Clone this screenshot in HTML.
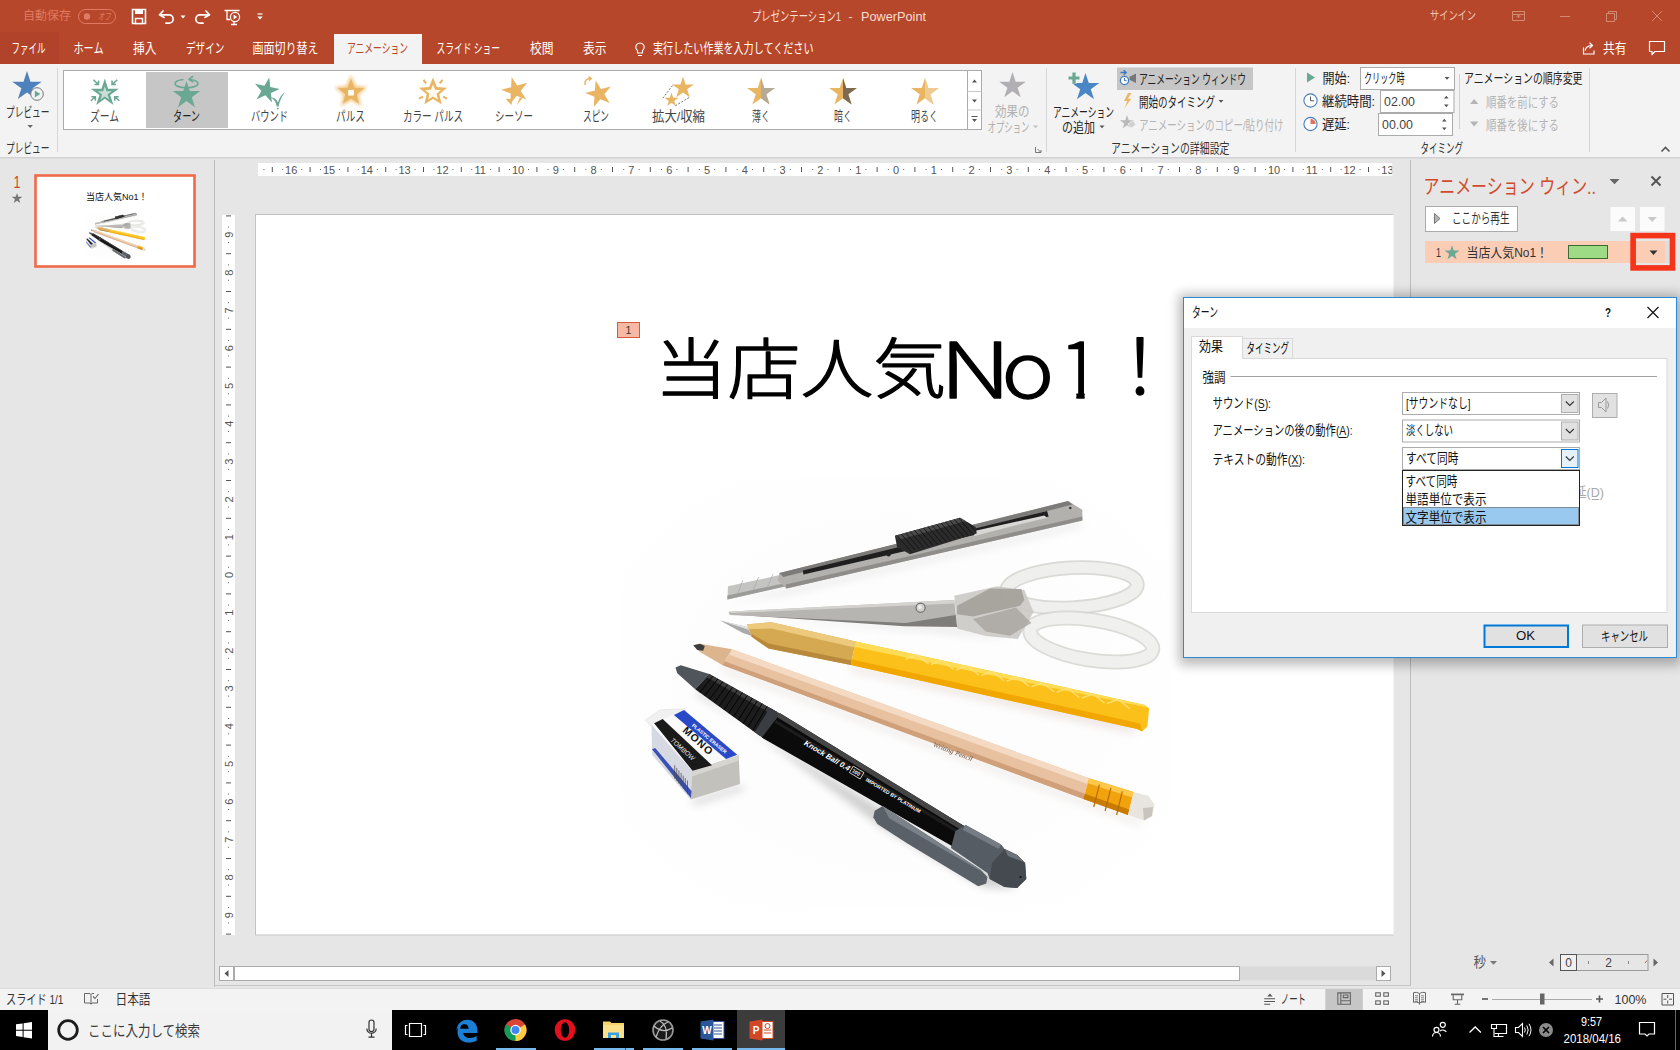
<!DOCTYPE html>
<html lang="ja"><head><meta charset="utf-8"><title>プレゼンテーション1 - PowerPoint</title>
<style>
html,body{margin:0;padding:0;background:#e6e6e6;overflow:hidden}
body{width:1680px;height:1050px;position:relative}
svg{position:absolute;left:0;top:0;display:block;font-family:"Liberation Sans", "Noto Sans CJK JP", sans-serif;}
text{white-space:pre}
</style></head><body>
<svg width="1680" height="1050" viewBox="0 0 1680 1050">
<defs><filter id="glowb" x="-30%" y="-30%" width="160%" height="160%"><feGaussianBlur stdDeviation="1.6"/></filter><radialGradient id="glow"><stop offset="0.55" stop-color="#f6d9a4" stop-opacity="0.9"/><stop offset="1" stop-color="#f6d9a4" stop-opacity="0"/></radialGradient><clipPath id="rh761"><rect x="761" y="70" width="20" height="50"/></clipPath><clipPath id="rh843"><rect x="843" y="70" width="20" height="50"/></clipPath><clipPath id="rh925"><rect x="925" y="70" width="20" height="50"/></clipPath><clipPath id="hrul"><rect x="258" y="163" width="1134.2" height="13"/></clipPath><clipPath id="vrul"><rect x="222" y="214.5" width="13" height="720.5"/></clipPath><clipPath id="view"><rect x="250" y="200" width="1143.5" height="760"/></clipPath><radialGradient id="photobg" cx="0.5" cy="0.5" r="0.62"><stop offset="0.6" stop-color="#fdfdfd"/><stop offset="1" stop-color="#ffffff"/></radialGradient><filter id="blur4"><feGaussianBlur stdDeviation="4"/></filter><filter id="dshadow" x="-10%" y="-10%" width="120%" height="125%"><feGaussianBlur stdDeviation="6"/></filter></defs>
<g id="chrome">
<rect x="0" y="0" width="1680" height="1050" fill="#e6e6e6" />
<rect x="0" y="0" width="1680" height="64" fill="#b7472a" />
<rect x="0" y="64" width="1680" height="93.5" fill="#f3f3f3" />
<rect x="0" y="157" width="1680" height="1.5" fill="#d2d2d2" />
<rect x="0" y="32" width="59" height="32" fill="#b0432a" />
<rect x="334" y="34" width="88" height="30" fill="#f3f3f3" />
<text x="23" y="20.3" font-size="12" fill="#e07a62" textLength="48" lengthAdjust="spacingAndGlyphs" >自動保存</text>
<rect x="78.5" y="9.5" width="37" height="14" fill="none" stroke="#e07a62" stroke-width="1" rx="7" />
<circle cx="87" cy="16.5" r="3.2" fill="#e07a62"/>
<text x="98" y="20.1" font-size="10" fill="#e07a62" textLength="13" lengthAdjust="spacingAndGlyphs" font-style="italic">オフ</text>
<path d="M132.5 9.5h13v14h-13z" fill="none" stroke="#ffffff" stroke-width="1.6" />
<rect x="135" y="9.5" width="8" height="4.5" fill="#ffffff" />
<rect x="135.5" y="18.5" width="7" height="5" fill="#b7472a" stroke="#ffffff" stroke-width="1.4" />
<path d="M163 11 l-3.5 3.8 l4.6 2.6" fill="none" stroke="#ffffff" stroke-width="1.7" stroke-linecap="round" stroke-linejoin="round"/>
<path d="M160.5 14.8 h8.5 a4.2 4.2 0 0 1 0 8.4 h-3" fill="none" stroke="#ffffff" stroke-width="1.7" stroke-linecap="round"/>
<path d="M180.5 15.5h5l-2.5 3z" fill="#ffffff" />
<path d="M206 11 l3.5 3.8 l-4.6 2.6" fill="none" stroke="#ffffff" stroke-width="1.7" stroke-linecap="round" stroke-linejoin="round"/>
<path d="M208.5 14.8 h-8.5 a4.2 4.2 0 0 0 0 8.4 h3" fill="none" stroke="#ffffff" stroke-width="1.7" stroke-linecap="round"/>
<path d="M224.5 10.5h15 M227 10.5v9h3 M231 24.5h6 M234 20v4" fill="none" stroke="#ffffff" stroke-width="1.3" />
<circle cx="235" cy="17" r="4.6" fill="#b7472a" stroke="#ffffff" stroke-width="1.2"/>
<path d="M233.6 14.6l3.6 2.4l-3.6 2.4z" fill="#ffffff" />
<path d="M257.5 14h5" fill="none" stroke="#ffffff" stroke-width="1.2" />
<path d="M257.3 16.5h5.4l-2.7 3z" fill="#ffffff" />
<text x="752" y="20.8" font-size="13.2" fill="#f6dcd4" textLength="89" lengthAdjust="spacingAndGlyphs" >プレゼンテーション1</text>
<text x="848.5" y="20.8" font-size="13.2" fill="#f6dcd4" textLength="4.0" lengthAdjust="spacingAndGlyphs" >-</text>
<text x="861" y="20.8" font-size="13.2" fill="#f6dcd4" textLength="65" lengthAdjust="spacingAndGlyphs" >PowerPoint</text>
<text x="1430" y="20.3" font-size="12" fill="#f0c5b8" textLength="46" lengthAdjust="spacingAndGlyphs" >サインイン</text>
<path d="M1512.5 11.5h12v9h-12z M1512.5 14.5h12 M1518.5 14.5v3.5 M1516.5 17l2 -2 l2 2" fill="none" stroke="#d38a74" stroke-width="1" />
<path d="M1560 16.5h10" fill="none" stroke="#d38a74" stroke-width="1" />
<path d="M1606.5 13.5h8v8h-8z M1608.5 13.5v-2h8v8h-2" fill="none" stroke="#d38a74" stroke-width="1" />
<path d="M1652 11l10 10 M1662 11l-10 10" fill="none" stroke="#d38a74" stroke-width="1" />
<text x="11.5" y="53.3" font-size="13.2" fill="#ffffff" textLength="34.0" lengthAdjust="spacingAndGlyphs" >ファイル</text>
<text x="73.5" y="53.3" font-size="13.2" fill="#ffffff" textLength="30.0" lengthAdjust="spacingAndGlyphs" >ホーム</text>
<text x="133" y="53.3" font-size="13.2" fill="#ffffff" textLength="23.5" lengthAdjust="spacingAndGlyphs" >挿入</text>
<text x="186" y="53.3" font-size="13.2" fill="#ffffff" textLength="38.5" lengthAdjust="spacingAndGlyphs" >デザイン</text>
<text x="252.5" y="53.3" font-size="13.2" fill="#ffffff" textLength="66.0" lengthAdjust="spacingAndGlyphs" >画面切り替え</text>
<text x="436.5" y="53.3" font-size="13.2" fill="#ffffff" textLength="63.5" lengthAdjust="spacingAndGlyphs" >スライド ショー</text>
<text x="530" y="53.3" font-size="13.2" fill="#ffffff" textLength="23.5" lengthAdjust="spacingAndGlyphs" >校閲</text>
<text x="583" y="53.3" font-size="13.2" fill="#ffffff" textLength="23.5" lengthAdjust="spacingAndGlyphs" >表示</text>
<text x="347" y="53.3" font-size="13.2" fill="#b7472a" textLength="61" lengthAdjust="spacingAndGlyphs" >アニメーション</text>
<path d="M637.5 50.5 a4.2 4.2 0 1 1 5 0 v2.5 h-5z M638 55.5h4" fill="none" stroke="#ffffff" stroke-width="1.1" />
<text x="653" y="53.3" font-size="13.2" fill="#ffffff" textLength="160.5" lengthAdjust="spacingAndGlyphs" >実行したい作業を入力してください</text>
<path d="M1583.5 47.5v6.5h10.5v-3.5 M1585 50.5 c1-3.5 3.5-5 7-5 M1589.5 42.8l3 2.7l-3 2.7" fill="none" stroke="#ffffff" stroke-width="1.2" stroke-linejoin="round"/>
<text x="1603" y="53.3" font-size="13.2" fill="#ffffff" textLength="23.5" lengthAdjust="spacingAndGlyphs" >共有</text>
<path d="M1649.5 41.5h15v10h-9.5l-3 3v-3h-2.5z" fill="none" stroke="#ffffff" stroke-width="1.2" stroke-linejoin="round"/>
</g>
<g id="ribbon">
<polygon points="27.00,71.00 30.48,81.71 41.74,81.71 32.63,88.33 36.11,99.04 27.00,92.42 17.89,99.04 21.37,88.33 12.26,81.71 23.52,81.71" fill="#4f81bd" />
<circle cx="37" cy="94" r="6.3" fill="#f3f3f3" stroke="#777" stroke-width="1"/>
<path d="M34.8 90.6l5.6 3.4l-5.6 3.4z" fill="#6aa893" />
<text x="6" y="117.3" font-size="13.2" fill="#333" textLength="43.5" lengthAdjust="spacingAndGlyphs" >プレビュー</text>
<path d="M27.5 125h5.4l-2.7 3z" fill="#666" />
<text x="6" y="153.3" font-size="13.2" fill="#333" textLength="43.5" lengthAdjust="spacingAndGlyphs" >プレビュー</text>
<line x1="57.5" y1="68" x2="57.5" y2="152" stroke="#d6d6d6" stroke-width="1" />
<rect x="63.5" y="70.5" width="904" height="59" fill="#ffffff" stroke="#ababab" stroke-width="1" />
<rect x="967.5" y="70.5" width="14" height="59" fill="#ffffff" stroke="#ababab" stroke-width="1" />
<line x1="967.5" y1="91.5" x2="981.5" y2="91.5" stroke="#c8c8c8" stroke-width="1" />
<line x1="967.5" y1="110" x2="981.5" y2="110" stroke="#c8c8c8" stroke-width="1" />
<path d="M972 82.5h5l-2.5-3z" fill="#555" />
<path d="M972 99.5h5l-2.5 3z" fill="#555" />
<path d="M971.5 116.5h6" fill="none" stroke="#555" stroke-width="1" />
<path d="M972 119h5l-2.5 3z" fill="#555" />
<rect x="146" y="72" width="82" height="56" fill="#c6c6c6" />
<text x="90" y="121.3" font-size="13.2" fill="#444444" textLength="29" lengthAdjust="spacingAndGlyphs" >ズーム</text>
<text x="173" y="121.3" font-size="13.2" fill="#222" textLength="27" lengthAdjust="spacingAndGlyphs" >ターン</text>
<text x="251" y="121.3" font-size="13.2" fill="#444444" textLength="37" lengthAdjust="spacingAndGlyphs" >バウンド</text>
<text x="336" y="121.3" font-size="13.2" fill="#444444" textLength="29" lengthAdjust="spacingAndGlyphs" >パルス</text>
<text x="403" y="121.3" font-size="13.2" fill="#444444" textLength="60" lengthAdjust="spacingAndGlyphs" >カラー パルス</text>
<text x="495" y="121.3" font-size="13.2" fill="#444444" textLength="38" lengthAdjust="spacingAndGlyphs" >シーソー</text>
<text x="583" y="121.3" font-size="13.2" fill="#444444" textLength="26" lengthAdjust="spacingAndGlyphs" >スピン</text>
<text x="652" y="121.3" font-size="13.2" fill="#444444" textLength="53" lengthAdjust="spacingAndGlyphs" >拡大/収縮</text>
<text x="752" y="121.3" font-size="13.2" fill="#444444" textLength="18" lengthAdjust="spacingAndGlyphs" >薄く</text>
<text x="834" y="121.3" font-size="13.2" fill="#444444" textLength="18" lengthAdjust="spacingAndGlyphs" >暗く</text>
<text x="911" y="121.3" font-size="13.2" fill="#444444" textLength="27" lengthAdjust="spacingAndGlyphs" >明るく</text>
<polygon points="104.80,78.50 108.10,88.66 118.78,88.66 110.14,94.94 113.44,105.09 104.80,98.82 96.16,105.09 99.46,94.94 90.82,88.66 101.50,88.66" fill="#6aa893" />
<polygon points="104.80,86.20 106.46,91.31 111.84,91.31 107.49,94.47 109.15,99.59 104.80,96.43 100.45,99.59 102.11,94.47 97.76,91.31 103.14,91.31" fill="#c9ddd6" />
<path d="M93.4 79.8L98.5 84.6 M94.5 84.6H98.5V80.6" fill="none" stroke="#6aa893" stroke-width="1.5" />
<path d="M117.3 79.8L112 84.6 M116 84.6H112V80.6" fill="none" stroke="#6aa893" stroke-width="1.5" />
<path d="M90.8 100.8L95.4 96.8 M91.4 96.8H95.4V100.8" fill="none" stroke="#6aa893" stroke-width="1.5" />
<path d="M119.3 100.8L114.7 96.8 M118.7 96.8H114.7V100.8" fill="none" stroke="#6aa893" stroke-width="1.5" />
<polygon points="186.50,81.00 189.76,91.02 200.29,91.02 191.77,97.21 195.02,107.23 186.50,101.04 177.98,107.23 181.23,97.21 172.71,91.02 183.24,91.02" fill="#6aa893" />
<path d="M189.5 79.5 a11.5 4.2 0 1 1 -6 0" fill="none" stroke="#6aa893" stroke-width="1.6" />
<path d="M193.0 76.2 l-4 3.2 l4.2 2.6" fill="none" stroke="#6aa893" stroke-width="1.6" stroke-linejoin="round"/>
<polygon points="269.27,77.39 270.28,87.00 279.73,89.01 270.90,92.94 271.91,102.55 265.44,95.37 256.62,99.30 261.45,90.93 254.98,83.75 264.43,85.76" fill="#6aa893" />
<path d="M270.3 97.2Q276.2 97.6 278 102.6Q279.6 96 285 92Q280 99 278.6 106.4L276.8 106.4Q275.6 99.6 270.3 97.2z" fill="#6aa893" />
<circle cx="277.8" cy="108.6" r="0.9" fill="#6aa893"/>
<polygon points="351.00,74.80 356.00,85.42 367.64,86.89 359.08,94.93 361.29,106.46 351.00,100.80 340.71,106.46 342.92,94.93 334.36,86.89 346.00,85.42" fill="#f3cf94" filter="url(#glowb)"/>
<polygon points="351.00,78.90 354.53,87.65 363.93,88.30 356.71,94.35 358.99,103.50 351.00,98.50 343.01,103.50 345.29,94.35 338.07,88.30 347.47,87.65" fill="#e9b563" />
<rect x="348.2" y="89.9" width="5.6" height="5.6" fill="#ffffff" />
<polygon points="433.00,77.50 436.88,86.96 447.08,87.73 439.28,94.34 441.70,104.27 433.00,98.90 424.30,104.27 426.72,94.34 418.92,87.73 429.12,86.96" fill="#e9b563" />
<polygon points="433.00,84.40 435.17,89.71 440.89,90.14 436.52,93.84 437.88,99.41 433.00,96.40 428.12,99.41 429.48,93.84 425.11,90.14 430.83,89.71" fill="#fffaf0" />
<path d="M426.2 83.3L423.5 79.8" fill="none" stroke="#e9b563" stroke-width="2.1" />
<path d="M439.8 83.3L442.5 79.8" fill="none" stroke="#e9b563" stroke-width="2.1" />
<path d="M423.0 96.6L419.0 98.6" fill="none" stroke="#e9b563" stroke-width="2.1" />
<path d="M443.0 96.6L447.0 98.6" fill="none" stroke="#e9b563" stroke-width="2.1" />
<polygon points="511.62,76.88 517.24,85.54 527.21,82.87 520.72,90.88 526.34,99.54 516.70,95.84 510.21,103.86 510.75,93.55 501.12,89.86 511.08,87.19" fill="#e9b563" />
<path d="M505.5 98.8L511.4 105L512.6 99.2z M517 105L522.7 97.8L519.7 97.4z" fill="#e9b563" />
<polygon points="595.61,80.42 601.00,89.04 610.87,86.58 604.33,94.37 609.72,103.00 600.29,99.19 593.76,106.98 594.46,96.83 585.03,93.02 594.90,90.56" fill="#e9b563" />
<path d="M585 85 q-1 -6 5 -6.5" fill="none" stroke="#e9b563" stroke-width="1.5" />
<path d="M588.5 75.8 l4 2.8 l-3.6 3z" fill="#e9b563" />
<polygon points="683.00,76.50 685.58,84.45 693.94,84.45 687.18,89.36 689.76,97.30 683.00,92.39 676.24,97.30 678.82,89.36 672.06,84.45 680.42,84.45" fill="#e9b563" />
<polygon points="671.50,92.50 673.18,97.68 678.63,97.68 674.22,100.89 675.91,106.07 671.50,102.86 667.09,106.07 668.78,100.89 664.37,97.68 669.82,97.68" fill="#e9b563" />
<path d="M672.5 85.5l-9.5 12.5 M689.0 97.5 l-14 8.5" fill="none" stroke="#777" stroke-width="1" stroke-dasharray="2 1.5"/>
<polygon points="761.00,78.00 764.28,88.09 774.89,88.09 766.30,94.32 769.58,104.41 761.00,98.18 752.42,104.41 755.70,94.32 747.11,88.09 757.72,88.09" fill="#e9b563" />
<polygon points="761.00,78.00 764.28,88.09 774.89,88.09 766.30,94.32 769.58,104.41 761.00,98.18 752.42,104.41 755.70,94.32 747.11,88.09 757.72,88.09" fill="#b4aa98" clip-path="url(#rh761)"/>
<polygon points="843.00,78.00 846.28,88.09 856.89,88.09 848.30,94.32 851.58,104.41 843.00,98.18 834.42,104.41 837.70,94.32 829.11,88.09 839.72,88.09" fill="#e9b563" />
<polygon points="843.00,78.00 846.28,88.09 856.89,88.09 848.30,94.32 851.58,104.41 843.00,98.18 834.42,104.41 837.70,94.32 829.11,88.09 839.72,88.09" fill="#7d6a52" clip-path="url(#rh843)"/>
<polygon points="925.00,78.00 928.28,88.09 938.89,88.09 930.30,94.32 933.58,104.41 925.00,98.18 916.42,104.41 919.70,94.32 911.11,88.09 921.72,88.09" fill="#e9b563" />
<polygon points="925.00,78.00 928.28,88.09 938.89,88.09 930.30,94.32 933.58,104.41 925.00,98.18 916.42,104.41 919.70,94.32 911.11,88.09 921.72,88.09" fill="#efcb92" clip-path="url(#rh925)"/>
<polygon points="1012.50,72.00 1015.64,81.67 1025.81,81.67 1017.59,87.65 1020.73,97.33 1012.50,91.35 1004.27,97.33 1007.41,87.65 999.19,81.67 1009.36,81.67" fill="#b1afb4" />
<text x="995" y="116.3" font-size="13.2" fill="#b0b0b0" textLength="34.5" lengthAdjust="spacingAndGlyphs" >効果の</text>
<text x="987.5" y="132.3" font-size="13.2" fill="#b0b0b0" textLength="42.0" lengthAdjust="spacingAndGlyphs" >オプション</text>
<path d="M1033 125.5h5l-2.5 2.8z" fill="#c0c0c0" />
<path d="M1035.5 147v5.5h5.5 M1037.5 149l3 3 M1041 150v2.5h-2.5" fill="none" stroke="#777" stroke-width="1" />
<line x1="1046.5" y1="68" x2="1046.5" y2="152" stroke="#d6d6d6" stroke-width="1" />
<polygon points="1085.50,73.00 1088.76,83.02 1099.29,83.02 1090.77,89.21 1094.02,99.23 1085.50,93.04 1076.98,99.23 1080.23,89.21 1071.71,83.02 1082.24,83.02" fill="#4a86c5" />
<path d="M1068.5 78h11 M1074 72.5v11" fill="none" stroke="#f3f3f3" stroke-width="5.5" />
<path d="M1068.5 78h11 M1074 72.5v11" fill="none" stroke="#6aa893" stroke-width="3.2" />
<text x="1053" y="116.8" font-size="13.2" fill="#222" textLength="61" lengthAdjust="spacingAndGlyphs" >アニメーション</text>
<text x="1062" y="132.3" font-size="13.2" fill="#222" textLength="33" lengthAdjust="spacingAndGlyphs" >の追加</text>
<path d="M1099.5 125.5h5l-2.5 2.8z" fill="#555" />
<rect x="1117" y="67.5" width="136" height="22.5" fill="#c6c6c6" />
<path d="M1120.5 72.5h5.5 M1123.7 70.3l2.5 2.2l-2.5 2.2" fill="none" stroke="#3c78c0" stroke-width="1.3" />
<circle cx="1124.5" cy="80.5" r="4.1" fill="#fff" stroke="#3c78c0" stroke-width="1.3"/>
<path d="M1124.5 78v2.7h2.2" fill="none" stroke="#3c78c0" stroke-width="1" />
<path d="M1136 73.5v9.5l-6.5 -3.3v-2.9z" fill="#777" />
<text x="1139" y="83.8" font-size="13.2" fill="#222" textLength="107" lengthAdjust="spacingAndGlyphs" >アニメーション ウィンドウ</text>
<path d="M1128 93l-4 8h3.3l-2.8 7l6.8 -9.3h-3.4l3.6 -5.7z" fill="#eab866" />
<text x="1139" y="106.8" font-size="13.2" fill="#222" textLength="76" lengthAdjust="spacingAndGlyphs" >開始のタイミング</text>
<path d="M1218.5 100h5l-2.5 2.8z" fill="#555" />
<polygon points="1127.00,115.00 1128.68,120.18 1134.13,120.18 1129.72,123.39 1131.41,128.57 1127.00,125.36 1122.59,128.57 1124.28,123.39 1119.87,120.18 1125.32,120.18" fill="#b9b9b9" />
<path d="M1128 124l5 -3.5l3 4.2l-5 3.5z" fill="#cfcfcf" stroke="#f3f3f3" stroke-width="0.8" />
<text x="1139" y="129.8" font-size="13.2" fill="#b4b4b4" textLength="144.5" lengthAdjust="spacingAndGlyphs" >アニメーションのコピー/貼り付け</text>
<text x="1111" y="153.3" font-size="13.2" fill="#333" textLength="118.5" lengthAdjust="spacingAndGlyphs" >アニメーションの詳細設定</text>
<line x1="1295.5" y1="68" x2="1295.5" y2="152" stroke="#d6d6d6" stroke-width="1" />
<path d="M1307 72.5l8 5l-8 5z" fill="#6aa893" />
<text x="1322.5" y="82.8" font-size="13.2" fill="#222" textLength="27.5" lengthAdjust="spacingAndGlyphs" >開始:</text>
<rect x="1360.5" y="67.5" width="94" height="22" fill="#fff" stroke="#ababab" stroke-width="1" />
<text x="1364" y="83.3" font-size="13.2" fill="#222" textLength="40.5" lengthAdjust="spacingAndGlyphs" >クリック時</text>
<path d="M1444.5 77h5l-2.5 2.8z" fill="#555" />
<circle cx="1310.5" cy="100.5" r="6.6" fill="#fff" stroke="#4a7ebb" stroke-width="1.1"/>
<path d="M1310.5 96.5v4.3h3.6" fill="none" stroke="#555" stroke-width="1" />
<text x="1322" y="106.3" font-size="13.2" fill="#222" textLength="53" lengthAdjust="spacingAndGlyphs" >継続時間:</text>
<rect x="1380.5" y="90.5" width="73.5" height="22" fill="#fff" stroke="#ababab" stroke-width="1" />
<text x="1384" y="106.3" font-size="13.2" fill="#444" textLength="31" lengthAdjust="spacingAndGlyphs" >02.00</text>
<path d="M1444 98.5h4.6l-2.3-2.8z M1444 104.5h4.6l-2.3 2.8z" fill="#555" />
<circle cx="1310.5" cy="124" r="6.6" fill="#fff" stroke="#4a7ebb" stroke-width="1.1"/>
<path d="M1310.5 124v-5.2a5.2 5.2 0 0 1 5.2 5.2z" fill="#e0745a" />
<text x="1322" y="129.3" font-size="13.2" fill="#222" textLength="28" lengthAdjust="spacingAndGlyphs" >遅延:</text>
<rect x="1378.5" y="113.5" width="74" height="22" fill="#fff" stroke="#ababab" stroke-width="1" />
<text x="1382" y="129.3" font-size="13.2" fill="#444" textLength="31" lengthAdjust="spacingAndGlyphs" >00.00</text>
<path d="M1442 121.5h4.6l-2.3-2.8z M1442 127.5h4.6l-2.3 2.8z" fill="#555" />
<line x1="1459.5" y1="74" x2="1459.5" y2="129" stroke="#d0d0d0" stroke-width="1" />
<text x="1464" y="82.8" font-size="13.2" fill="#222" textLength="118.5" lengthAdjust="spacingAndGlyphs" >アニメーションの順序変更</text>
<path d="M1470 104h8.4l-4.2-5z" fill="#b4b4b4" />
<text x="1486" y="107.3" font-size="13.2" fill="#b4b4b4" textLength="73" lengthAdjust="spacingAndGlyphs" >順番を前にする</text>
<path d="M1470 121.5h8.4l-4.2 5z" fill="#b4b4b4" />
<text x="1486" y="130.3" font-size="13.2" fill="#b4b4b4" textLength="73" lengthAdjust="spacingAndGlyphs" >順番を後にする</text>
<text x="1420.5" y="153.3" font-size="13.2" fill="#333" textLength="42.5" lengthAdjust="spacingAndGlyphs" >タイミング</text>
<line x1="1589.5" y1="68" x2="1589.5" y2="152" stroke="#d6d6d6" stroke-width="1" />
<path d="M1661.5 151.5l4 -4l4 4" fill="none" stroke="#555" stroke-width="1.6" />
</g>
<g id="main">
<text x="13.5" y="188.1" font-size="17" fill="#d24726" textLength="7.0" lengthAdjust="spacingAndGlyphs" >1</text>
<polygon points="17.00,192.90 18.26,196.77 22.33,196.77 19.03,199.16 20.29,203.03 17.00,200.64 13.71,203.03 14.97,199.16 11.67,196.77 15.74,196.77" fill="#767676" />
<rect x="35.5" y="175.5" width="159" height="91" fill="#ffffff" stroke="#f0694a" stroke-width="2.6" />
<text x="86" y="200.4" font-size="9.5" fill="#111" textLength="61.5" lengthAdjust="spacingAndGlyphs" >当店人気No1！</text>
<g transform="translate(82.5,210) scale(0.1186) translate(-622,-478)" opacity="0.95"><g id="photot">
<rect x="622" y="478" width="548" height="432" fill="url(#photobg)" />
<g filter="url(#blur4)" opacity="0.25">
<polygon points="700.0,690.7 764.0,738.7 880.0,826.3 982.9,886.9 1017.1,889.1 976.0,862.9 880.0,808.0 694.7,693.3" fill="#444" />
<polygon points="690.7,800.0 740.0,785.3 745.3,789.3 694.7,805.3" fill="#666" />
<polygon points="731.4,615.7 957.1,628.6 1014.3,640.0 957.1,632.9" fill="#888" />
<polygon points="728.6,601.4 785.7,590.0 1082.3,522.3 1082.3,525.7 785.7,593.7" fill="#888" />
<polygon points="851.4,665.7 1128.6,722.9 1137.1,730.3 1131.4,733.0 851.4,670.9" fill="#b98" />
<polygon points="722.7,666.1 1083.4,800.0 1142.9,822.2 1140.6,825.4 1081.1,803.4 721.3,669.9" fill="#a98" />
</g>
<polygon points="728.0,586.3 780.0,575.1 786.3,585.7 727.4,599.4" fill="#c4c4c2" />
<polygon points="727.4,595.4 785.7,582.9 786.3,586.3 727.4,599.4" fill="#9b9b99" />
<line x1="742.9" y1="580.2" x2="737.7" y2="593.3" stroke="#a8a8a6" stroke-width="0.7"/>
<line x1="758.6" y1="577.0" x2="753.4" y2="589.8" stroke="#a8a8a6" stroke-width="0.7"/>
<line x1="772.9" y1="574.2" x2="767.7" y2="586.7" stroke="#a8a8a6" stroke-width="0.7"/>
<polygon points="779.4,573.1 1068.0,501.1 1082.3,509.7 1082.3,520.6 786.3,588.6 777.7,580.6" fill="#b3b1ae" />
<polygon points="779.4,573.1 1068.0,501.1 1072.6,504.6 783.4,577.1" fill="#7d7b79" />
<polygon points="785.7,584.6 1082.3,516.6 1082.3,520.6 786.3,588.6" fill="#8f8d8a" />
<polygon points="802.9,570.6 1047.1,510.9 1048.6,516.6 974.3,534.9 905.7,550.9 803.4,574.6" fill="#1f1f1f" />
<polygon points="974.3,530.9 1044.3,515.4 1047.1,517.7 1014.3,525.7 974.3,536.0" fill="#d9d7d4" />
<polygon points="894.9,535.7 960.0,517.7 975.7,527.1 976.6,533.4 910.0,554.3 897.1,547.1" fill="#2b2b2b" />
<polygon points="894.9,535.7 960.0,517.7 965.7,521.1 900.0,539.4" fill="#4a4a4a" />
<clipPath id="sldt"><polygon points="894.9,535.7 960.0,517.7 975.7,527.1 976.6,533.4 910.0,554.3 897.1,547.1"/></clipPath><g clip-path="url(#sldt)">
<line x1="896.6" y1="535.0" x2="910.9" y2="551.5" stroke="#101010" stroke-width="0.8"/>
<line x1="901.0" y1="533.7" x2="915.3" y2="550.3" stroke="#101010" stroke-width="0.8"/>
<line x1="905.4" y1="532.5" x2="919.7" y2="549.1" stroke="#101010" stroke-width="0.8"/>
<line x1="909.9" y1="531.3" x2="924.1" y2="547.9" stroke="#101010" stroke-width="0.8"/>
<line x1="914.3" y1="530.1" x2="928.6" y2="546.6" stroke="#101010" stroke-width="0.8"/>
<line x1="918.7" y1="528.8" x2="933.0" y2="545.4" stroke="#101010" stroke-width="0.8"/>
<line x1="923.1" y1="527.6" x2="937.4" y2="544.2" stroke="#101010" stroke-width="0.8"/>
<line x1="927.6" y1="526.4" x2="941.9" y2="543.0" stroke="#101010" stroke-width="0.8"/>
<line x1="932.0" y1="525.2" x2="946.3" y2="541.7" stroke="#101010" stroke-width="0.8"/>
<line x1="936.4" y1="524.0" x2="950.7" y2="540.5" stroke="#101010" stroke-width="0.8"/>
<line x1="940.9" y1="522.7" x2="955.1" y2="539.3" stroke="#101010" stroke-width="0.8"/>
<line x1="945.3" y1="521.5" x2="959.6" y2="538.1" stroke="#101010" stroke-width="0.8"/>
<line x1="949.7" y1="520.3" x2="964.0" y2="536.9" stroke="#101010" stroke-width="0.8"/>
<line x1="954.1" y1="519.1" x2="968.4" y2="535.6" stroke="#101010" stroke-width="0.8"/>
<line x1="958.6" y1="517.8" x2="972.9" y2="534.4" stroke="#101010" stroke-width="0.8"/>
<line x1="963.0" y1="516.6" x2="977.3" y2="533.2" stroke="#101010" stroke-width="0.8"/>
</g>
<circle cx="888.6" cy="554.3" r="2.2" fill="#222"/>
<circle cx="1070.3" cy="508.0" r="1.2" fill="#333"/>
<ellipse cx="1072.0" cy="587.7" rx="65.5" ry="20" fill="none" stroke="#d0d0cc" stroke-width="14.5" opacity="0.8" transform="rotate(-3 1072.0 587.7)"/>
<ellipse cx="1072.0" cy="587.7" rx="65.5" ry="20" fill="none" stroke="#f0f0ee" stroke-width="11" opacity="0.95" transform="rotate(-3 1072.0 587.7)"/>
<ellipse cx="1091.4" cy="640.0" rx="62" ry="20" fill="none" stroke="#d2d2ce" stroke-width="15" opacity="0.8" transform="rotate(9 1091.4 640.0)"/>
<ellipse cx="1091.4" cy="640.0" rx="62" ry="20" fill="none" stroke="#f1f1ef" stroke-width="11.5" opacity="0.95" transform="rotate(9 1091.4 640.0)"/>
<polygon points="954.3,595.7 997.1,586.3 1024.3,590.0 1033.7,612.0 1017.7,639.1 985.7,636.0 957.1,628.6" fill="#cbc9c4" stroke="none" stroke-width="1" opacity="0.9"/>
<polygon points="990.0,588.6 1021.4,589.1 1024.3,600.0 1020.0,605.7 972.9,616.6 957.1,614.3 957.1,605.7" fill="#a09d97" stroke="none" stroke-width="1" opacity="0.85"/>
<polygon points="972.9,618.9 1015.7,607.4 1031.4,622.9 1010.0,635.7 985.7,631.4" fill="#a8a59f" stroke="none" stroke-width="1" opacity="0.8"/>
<polygon points="728.6,614.3 905.7,622.3 955.7,614.3 957.1,627.1 904.3,626.3" fill="#7f7d7a" />
<polygon points="728.6,611.7 954.3,600.0 955.7,614.9 905.7,622.9 729.7,615.1" fill="#b7b5b1" />
<polygon points="728.6,611.7 954.3,600.0 954.6,603.4 731.4,613.1" fill="#d5d3cf" />
<circle cx="920.6" cy="607.7" r="4.6" fill="#cfcfcd" stroke="#6b6b69" stroke-width="1.1"/><circle cx="919.8000000000001" cy="606.9000000000001" r="2" fill="#eee"/>
<polygon points="720.0,620.6 747.1,627.1 752.0,636.0 742.9,633.1" fill="#a9a9a9" />
<polygon points="720.0,620.6 747.1,627.1 748.6,629.7" fill="#e2e2e2" />
<polygon points="747.1,624.3 771.4,622.3 855.7,641.4 850.9,665.1 768.6,648.6 751.4,636.6" fill="#d4a951" />
<polygon points="747.1,624.3 771.4,622.3 855.7,641.4 854.6,647.4 771.4,628.6 748.0,629.1" fill="#ecc97c" />
<polygon points="752.0,634.3 768.6,643.4 851.7,660.6 850.9,665.1 768.6,648.6 751.4,636.6" fill="#b8893a" />
<polygon points="855.7,641.4 1144.9,704.9 1149.1,708.6 1147.4,726.3 1142.3,731.4 1137.1,729.1 850.9,665.1" fill="#fbc01a" />
<polygon points="855.7,641.4 1144.9,704.9 1147.4,707.4 854.9,646.9" fill="#ffdc55" />
<polygon points="852.0,659.4 1140.0,723.4 1142.3,731.4 1137.1,729.1 850.9,665.1" fill="#f1a600" />
<polyline points="905.7,658.9 917.1,654.9 928.6,664.0" fill="none" stroke="#ffe27a" stroke-width="1.6" opacity="0.8"/>
<polyline points="930.9,664.4 942.3,660.4 953.7,669.6" fill="none" stroke="#ffe27a" stroke-width="1.6" opacity="0.8"/>
<polyline points="956.0,670.0 967.4,666.0 978.9,675.2" fill="none" stroke="#ffe27a" stroke-width="1.6" opacity="0.8"/>
<polyline points="981.1,675.6 992.6,671.6 1004.0,680.7" fill="none" stroke="#ffe27a" stroke-width="1.6" opacity="0.8"/>
<polyline points="1006.3,681.2 1017.7,677.2 1029.1,686.3" fill="none" stroke="#ffe27a" stroke-width="1.6" opacity="0.8"/>
<polyline points="1031.4,686.8 1042.9,682.8 1054.3,691.9" fill="none" stroke="#ffe27a" stroke-width="1.6" opacity="0.8"/>
<polyline points="1056.6,692.3 1068.0,688.3 1079.4,697.5" fill="none" stroke="#ffe27a" stroke-width="1.6" opacity="0.8"/>
<polyline points="1081.7,697.9 1093.1,693.9 1104.6,703.1" fill="none" stroke="#ffe27a" stroke-width="1.6" opacity="0.8"/>
<polyline points="1106.9,703.5 1118.3,699.5 1129.7,708.7" fill="none" stroke="#ffe27a" stroke-width="1.6" opacity="0.8"/>
<polygon points="693.3,645.3 700.0,643.7 732.0,649.3 722.7,665.3 700.0,652.0" fill="#dcb48e" />
<polygon points="693.3,645.3 700.0,643.7 704.8,645.9 703.2,650.7 697.3,650.1" fill="#3d3d3d" />
<polygon points="732.0,649.3 1089.1,778.3 1083.4,798.9 722.7,665.3" fill="#e8c2a0" />
<polygon points="732.0,649.3 1089.1,778.3 1087.5,784.0 729.3,654.7" fill="#f4dac3" />
<polygon points="724.5,661.3 1084.8,793.8 1083.4,798.9 722.7,665.3" fill="#cfa07a" />
<polygon points="1089.1,778.3 1133.7,792.0 1128.0,814.9 1083.4,798.9" fill="#f0a30d" />
<polygon points="1089.1,778.3 1133.7,792.0 1132.3,797.5 1087.8,783.3" fill="#ffc84a" />
<polygon points="1084.8,793.8 1129.1,809.4 1128.0,814.9 1083.4,798.9" fill="#c97a00" />
<line x1="1099.4" y1="784.6" x2="1093.7" y2="807.0" stroke="#b86c00" stroke-width="1.2"/>
<line x1="1110.9" y1="788.0" x2="1105.1" y2="811.0" stroke="#b86c00" stroke-width="1.2"/>
<line x1="1122.3" y1="791.4" x2="1116.6" y2="815.0" stroke="#b86c00" stroke-width="1.2"/>
<polygon points="1133.7,792.0 1148.6,796.1 1154.3,804.6 1152.0,816.0 1144.0,820.6 1128.0,814.9" fill="#e8e5df" />
<polygon points="1142.9,808.0 1153.1,806.9 1152.0,816.0 1144.0,820.6" fill="#c9c5bd" />
<polygon points="645.3,720.0 660.0,709.9 684.5,708.8 686.7,712.0 651.5,726.7" fill="#f1f1f1" stroke="#dedede" stroke-width="0.6" />
<polygon points="651.5,724.8 684.0,709.9 737.3,754.7 692.0,770.7" fill="#fafafa" />
<polygon points="651.5,724.8 692.0,770.7 690.7,799.5 652.0,754.7" fill="#d7d9e2" />
<polygon points="692.0,770.7 738.7,755.2 740.0,784.0 690.7,799.5" fill="#c2c1bc" />
<polygon points="692.0,770.7 738.7,755.2 738.9,760.5 692.0,776.5" fill="#d6d5d0" />
<polygon points="684.0,709.9 737.3,754.7 726.1,758.9 673.9,714.9" fill="#2a49c6" />
<polygon points="654.1,723.2 662.7,718.9 712.0,765.3 692.5,770.7" fill="#1a1a1a" />
<polygon points="652.0,749.3 655.2,748.0 691.5,790.9 690.9,797.9" fill="#3b50b4" />
<line x1="674.7" y1="765.3" x2="674.7" y2="778.7" stroke="#444" stroke-width="0.7"/>
<line x1="676.8" y1="767.9" x2="676.8" y2="781.2" stroke="#444" stroke-width="0.7"/>
<line x1="678.9" y1="770.4" x2="678.9" y2="783.7" stroke="#444" stroke-width="0.7"/>
<line x1="681.1" y1="772.9" x2="681.1" y2="786.3" stroke="#444" stroke-width="0.7"/>
<line x1="683.2" y1="775.5" x2="683.2" y2="788.8" stroke="#444" stroke-width="0.7"/>
<line x1="685.3" y1="778.0" x2="685.3" y2="791.3" stroke="#444" stroke-width="0.7"/>
<line x1="687.5" y1="780.5" x2="687.5" y2="793.9" stroke="#444" stroke-width="0.7"/>
<polygon points="675.5,667.5 680.8,665.3 709.3,674.1 695.2,689.3 677.3,673.3" fill="#50555b" />
<polygon points="709.3,674.1 777.3,712.0 760.0,736.0 695.2,689.3" fill="#1c1c1c" />
<polygon points="709.3,674.1 777.3,712.0 774.7,715.7 706.9,677.3" fill="#3c3c3c" />
<line x1="712.8" y1="676.3" x2="700.0" y2="692.3" stroke="#000" stroke-width="0.9"/>
<line x1="717.7" y1="679.0" x2="704.8" y2="695.7" stroke="#000" stroke-width="0.9"/>
<line x1="722.7" y1="681.8" x2="709.6" y2="699.2" stroke="#000" stroke-width="0.9"/>
<line x1="727.6" y1="684.5" x2="714.4" y2="702.7" stroke="#000" stroke-width="0.9"/>
<line x1="732.5" y1="687.3" x2="719.2" y2="706.1" stroke="#000" stroke-width="0.9"/>
<line x1="737.5" y1="690.0" x2="724.0" y2="709.6" stroke="#000" stroke-width="0.9"/>
<line x1="742.4" y1="692.7" x2="728.8" y2="713.1" stroke="#000" stroke-width="0.9"/>
<line x1="747.3" y1="695.5" x2="733.6" y2="716.5" stroke="#000" stroke-width="0.9"/>
<line x1="752.3" y1="698.2" x2="738.4" y2="720.0" stroke="#000" stroke-width="0.9"/>
<line x1="757.2" y1="701.0" x2="743.2" y2="723.5" stroke="#000" stroke-width="0.9"/>
<line x1="762.1" y1="703.7" x2="748.0" y2="726.9" stroke="#000" stroke-width="0.9"/>
<line x1="767.1" y1="706.5" x2="752.8" y2="730.4" stroke="#000" stroke-width="0.9"/>
<line x1="772.0" y1="709.2" x2="757.6" y2="733.9" stroke="#000" stroke-width="0.9"/>
<polygon points="769.3,708.8 780.0,713.3 762.7,738.1 754.7,732.0" fill="#3a3e42" />
<polygon points="780.0,713.3 964.6,826.3 955.4,848.0 761.9,737.6" fill="#0b0b0b" />
<polygon points="780.0,713.3 964.6,826.3 962.7,830.9 777.3,717.3" fill="#454545" />
<polygon points="776.0,720.0 962.3,832.7 961.1,835.4 774.7,722.7" fill="#1d1d1d" />
<polygon points="874.7,810.7 882.7,805.9 980.6,869.7 987.4,877.0 986.3,883.4 978.3,886.2 907.4,843.4 877.3,824.0 873.3,817.3" fill="#5a6067" />
<polygon points="882.7,805.9 980.6,869.7 983.3,872.5 889.1,818.3" fill="#7b8188" />
<polygon points="955.4,830.9 965.7,825.1 1001.1,844.6 1004.6,849.1 1017.1,854.9 1025.1,862.9 1026.3,878.9 1017.1,888.0 1004.6,886.9 989.7,878.9 987.4,873.1 950.9,848.0" fill="#565c63" />
<polygon points="965.7,825.1 1001.1,844.6 998.9,849.1 962.7,829.7" fill="#767c83" />
<polygon points="1004.6,849.1 1017.1,854.9 1025.1,862.9 1026.3,878.9 1017.1,888.0 1004.6,886.9 989.7,878.9 992.0,862.9" fill="#454a50" />
<polygon points="1004.6,849.1 1017.1,854.9 1024.5,862.4 1008.0,856.0" fill="#6d737a" />
<circle cx="1020.6" cy="877.0" r="1.1" fill="#111"/>
</g></g>
<line x1="214.5" y1="160" x2="214.5" y2="987" stroke="#bdbdbd" stroke-width="1" />
<line x1="1410.5" y1="160" x2="1410.5" y2="985.5" stroke="#bdbdbd" stroke-width="1" />
<line x1="214.5" y1="985.5" x2="1410.5" y2="985.5" stroke="#c6c6c6" stroke-width="1" />
<g clip-path="url(#hrul)">
<rect x="258" y="163" width="1135.5" height="13" fill="#ffffff" />
<rect x="244.4" y="169" width="1" height="1" fill="#666" />
<rect x="263.4" y="169" width="1" height="1" fill="#666" />
<rect x="271.8" y="167" width="1" height="5" fill="#555" />
<text x="291.2" y="173.5" font-size="11" fill="#555" text-anchor="middle" >16</text>
<rect x="282.2" y="169" width="1" height="1" fill="#666" />
<rect x="301.2" y="169" width="1" height="1" fill="#666" />
<rect x="309.6" y="167" width="1" height="5" fill="#555" />
<text x="329.0" y="173.5" font-size="11" fill="#555" text-anchor="middle" >15</text>
<rect x="320.0" y="169" width="1" height="1" fill="#666" />
<rect x="339.0" y="169" width="1" height="1" fill="#666" />
<rect x="347.4" y="167" width="1" height="5" fill="#555" />
<text x="366.8" y="173.5" font-size="11" fill="#555" text-anchor="middle" >14</text>
<rect x="357.8" y="169" width="1" height="1" fill="#666" />
<rect x="376.8" y="169" width="1" height="1" fill="#666" />
<rect x="385.2" y="167" width="1" height="5" fill="#555" />
<text x="404.6" y="173.5" font-size="11" fill="#555" text-anchor="middle" >13</text>
<rect x="395.6" y="169" width="1" height="1" fill="#666" />
<rect x="414.6" y="169" width="1" height="1" fill="#666" />
<rect x="423.0" y="167" width="1" height="5" fill="#555" />
<text x="442.4" y="173.5" font-size="11" fill="#555" text-anchor="middle" >12</text>
<rect x="433.4" y="169" width="1" height="1" fill="#666" />
<rect x="452.4" y="169" width="1" height="1" fill="#666" />
<rect x="460.8" y="167" width="1" height="5" fill="#555" />
<text x="480.2" y="173.5" font-size="11" fill="#555" text-anchor="middle" >11</text>
<rect x="471.2" y="169" width="1" height="1" fill="#666" />
<rect x="490.2" y="169" width="1" height="1" fill="#666" />
<rect x="498.6" y="167" width="1" height="5" fill="#555" />
<text x="518.0" y="173.5" font-size="11" fill="#555" text-anchor="middle" >10</text>
<rect x="509.0" y="169" width="1" height="1" fill="#666" />
<rect x="528.0" y="169" width="1" height="1" fill="#666" />
<rect x="536.4" y="167" width="1" height="5" fill="#555" />
<text x="555.8" y="173.5" font-size="11" fill="#555" text-anchor="middle" >9</text>
<rect x="547.6" y="169" width="1" height="1" fill="#666" />
<rect x="563.0" y="169" width="1" height="1" fill="#666" />
<rect x="574.2" y="167" width="1" height="5" fill="#555" />
<text x="593.6" y="173.5" font-size="11" fill="#555" text-anchor="middle" >8</text>
<rect x="585.4" y="169" width="1" height="1" fill="#666" />
<rect x="600.8" y="169" width="1" height="1" fill="#666" />
<rect x="612.0" y="167" width="1" height="5" fill="#555" />
<text x="631.4" y="173.5" font-size="11" fill="#555" text-anchor="middle" >7</text>
<rect x="623.2" y="169" width="1" height="1" fill="#666" />
<rect x="638.6" y="169" width="1" height="1" fill="#666" />
<rect x="649.8" y="167" width="1" height="5" fill="#555" />
<text x="669.2" y="173.5" font-size="11" fill="#555" text-anchor="middle" >6</text>
<rect x="661.0" y="169" width="1" height="1" fill="#666" />
<rect x="676.4" y="169" width="1" height="1" fill="#666" />
<rect x="687.6" y="167" width="1" height="5" fill="#555" />
<text x="707.0" y="173.5" font-size="11" fill="#555" text-anchor="middle" >5</text>
<rect x="698.8" y="169" width="1" height="1" fill="#666" />
<rect x="714.2" y="169" width="1" height="1" fill="#666" />
<rect x="725.4" y="167" width="1" height="5" fill="#555" />
<text x="744.8" y="173.5" font-size="11" fill="#555" text-anchor="middle" >4</text>
<rect x="736.6" y="169" width="1" height="1" fill="#666" />
<rect x="752.0" y="169" width="1" height="1" fill="#666" />
<rect x="763.2" y="167" width="1" height="5" fill="#555" />
<text x="782.6" y="173.5" font-size="11" fill="#555" text-anchor="middle" >3</text>
<rect x="774.4" y="169" width="1" height="1" fill="#666" />
<rect x="789.8" y="169" width="1" height="1" fill="#666" />
<rect x="801.0" y="167" width="1" height="5" fill="#555" />
<text x="820.4" y="173.5" font-size="11" fill="#555" text-anchor="middle" >2</text>
<rect x="812.2" y="169" width="1" height="1" fill="#666" />
<rect x="827.6" y="169" width="1" height="1" fill="#666" />
<rect x="838.8" y="167" width="1" height="5" fill="#555" />
<text x="858.2" y="173.5" font-size="11" fill="#555" text-anchor="middle" >1</text>
<rect x="850.0" y="169" width="1" height="1" fill="#666" />
<rect x="865.4" y="169" width="1" height="1" fill="#666" />
<rect x="876.6" y="167" width="1" height="5" fill="#555" />
<text x="896.0" y="173.5" font-size="11" fill="#555" text-anchor="middle" >0</text>
<rect x="887.8" y="169" width="1" height="1" fill="#666" />
<rect x="903.2" y="169" width="1" height="1" fill="#666" />
<rect x="914.4" y="167" width="1" height="5" fill="#555" />
<text x="933.8" y="173.5" font-size="11" fill="#555" text-anchor="middle" >1</text>
<rect x="925.6" y="169" width="1" height="1" fill="#666" />
<rect x="941.0" y="169" width="1" height="1" fill="#666" />
<rect x="952.2" y="167" width="1" height="5" fill="#555" />
<text x="971.6" y="173.5" font-size="11" fill="#555" text-anchor="middle" >2</text>
<rect x="963.4" y="169" width="1" height="1" fill="#666" />
<rect x="978.8" y="169" width="1" height="1" fill="#666" />
<rect x="990.0" y="167" width="1" height="5" fill="#555" />
<text x="1009.4" y="173.5" font-size="11" fill="#555" text-anchor="middle" >3</text>
<rect x="1001.2" y="169" width="1" height="1" fill="#666" />
<rect x="1016.6" y="169" width="1" height="1" fill="#666" />
<rect x="1027.8" y="167" width="1" height="5" fill="#555" />
<text x="1047.2" y="173.5" font-size="11" fill="#555" text-anchor="middle" >4</text>
<rect x="1039.0" y="169" width="1" height="1" fill="#666" />
<rect x="1054.4" y="169" width="1" height="1" fill="#666" />
<rect x="1065.6" y="167" width="1" height="5" fill="#555" />
<text x="1085.0" y="173.5" font-size="11" fill="#555" text-anchor="middle" >5</text>
<rect x="1076.8" y="169" width="1" height="1" fill="#666" />
<rect x="1092.2" y="169" width="1" height="1" fill="#666" />
<rect x="1103.4" y="167" width="1" height="5" fill="#555" />
<text x="1122.8" y="173.5" font-size="11" fill="#555" text-anchor="middle" >6</text>
<rect x="1114.6" y="169" width="1" height="1" fill="#666" />
<rect x="1130.0" y="169" width="1" height="1" fill="#666" />
<rect x="1141.2" y="167" width="1" height="5" fill="#555" />
<text x="1160.6" y="173.5" font-size="11" fill="#555" text-anchor="middle" >7</text>
<rect x="1152.4" y="169" width="1" height="1" fill="#666" />
<rect x="1167.8" y="169" width="1" height="1" fill="#666" />
<rect x="1179.0" y="167" width="1" height="5" fill="#555" />
<text x="1198.4" y="173.5" font-size="11" fill="#555" text-anchor="middle" >8</text>
<rect x="1190.2" y="169" width="1" height="1" fill="#666" />
<rect x="1205.6" y="169" width="1" height="1" fill="#666" />
<rect x="1216.8" y="167" width="1" height="5" fill="#555" />
<text x="1236.2" y="173.5" font-size="11" fill="#555" text-anchor="middle" >9</text>
<rect x="1228.0" y="169" width="1" height="1" fill="#666" />
<rect x="1243.4" y="169" width="1" height="1" fill="#666" />
<rect x="1254.6" y="167" width="1" height="5" fill="#555" />
<text x="1274.0" y="173.5" font-size="11" fill="#555" text-anchor="middle" >10</text>
<rect x="1265.0" y="169" width="1" height="1" fill="#666" />
<rect x="1284.0" y="169" width="1" height="1" fill="#666" />
<rect x="1292.4" y="167" width="1" height="5" fill="#555" />
<text x="1311.8" y="173.5" font-size="11" fill="#555" text-anchor="middle" >11</text>
<rect x="1302.8" y="169" width="1" height="1" fill="#666" />
<rect x="1321.8" y="169" width="1" height="1" fill="#666" />
<rect x="1330.2" y="167" width="1" height="5" fill="#555" />
<text x="1349.6" y="173.5" font-size="11" fill="#555" text-anchor="middle" >12</text>
<rect x="1340.6" y="169" width="1" height="1" fill="#666" />
<rect x="1359.6" y="169" width="1" height="1" fill="#666" />
<rect x="1368.0" y="167" width="1" height="5" fill="#555" />
<text x="1387.4" y="173.5" font-size="11" fill="#555" text-anchor="middle" >13</text>
<rect x="1378.4" y="169" width="1" height="1" fill="#666" />
<rect x="1397.4" y="169" width="1" height="1" fill="#666" />
<rect x="1405.8" y="167" width="1" height="5" fill="#555" />
<text x="1425.2" y="173.5" font-size="11" fill="#555" text-anchor="middle" >14</text>
<rect x="1416.2" y="169" width="1" height="1" fill="#666" />
<rect x="1435.2" y="169" width="1" height="1" fill="#666" />
<rect x="1443.6" y="167" width="1" height="5" fill="#555" />
</g>
<g clip-path="url(#vrul)">
<rect x="222" y="214.5" width="13" height="720.5" fill="#ffffff" />
<text transform="translate(232.5,197.0) rotate(-90)" font-size="11" fill="#555" text-anchor="middle">10</text>
<rect x="228" y="187.0" width="1" height="1" fill="#666" />
<rect x="228" y="206.0" width="1" height="1" fill="#666" />
<rect x="226" y="215.4" width="5" height="1" fill="#555" />
<text transform="translate(232.5,234.8) rotate(-90)" font-size="11" fill="#555" text-anchor="middle">9</text>
<rect x="228" y="226.6" width="1" height="1" fill="#666" />
<rect x="228" y="242.0" width="1" height="1" fill="#666" />
<rect x="226" y="253.2" width="5" height="1" fill="#555" />
<text transform="translate(232.5,272.6) rotate(-90)" font-size="11" fill="#555" text-anchor="middle">8</text>
<rect x="228" y="264.4" width="1" height="1" fill="#666" />
<rect x="228" y="279.8" width="1" height="1" fill="#666" />
<rect x="226" y="291.0" width="5" height="1" fill="#555" />
<text transform="translate(232.5,310.4) rotate(-90)" font-size="11" fill="#555" text-anchor="middle">7</text>
<rect x="228" y="302.2" width="1" height="1" fill="#666" />
<rect x="228" y="317.6" width="1" height="1" fill="#666" />
<rect x="226" y="328.8" width="5" height="1" fill="#555" />
<text transform="translate(232.5,348.2) rotate(-90)" font-size="11" fill="#555" text-anchor="middle">6</text>
<rect x="228" y="340.0" width="1" height="1" fill="#666" />
<rect x="228" y="355.4" width="1" height="1" fill="#666" />
<rect x="226" y="366.6" width="5" height="1" fill="#555" />
<text transform="translate(232.5,386.0) rotate(-90)" font-size="11" fill="#555" text-anchor="middle">5</text>
<rect x="228" y="377.8" width="1" height="1" fill="#666" />
<rect x="228" y="393.2" width="1" height="1" fill="#666" />
<rect x="226" y="404.4" width="5" height="1" fill="#555" />
<text transform="translate(232.5,423.8) rotate(-90)" font-size="11" fill="#555" text-anchor="middle">4</text>
<rect x="228" y="415.6" width="1" height="1" fill="#666" />
<rect x="228" y="431.0" width="1" height="1" fill="#666" />
<rect x="226" y="442.2" width="5" height="1" fill="#555" />
<text transform="translate(232.5,461.6) rotate(-90)" font-size="11" fill="#555" text-anchor="middle">3</text>
<rect x="228" y="453.4" width="1" height="1" fill="#666" />
<rect x="228" y="468.8" width="1" height="1" fill="#666" />
<rect x="226" y="480.0" width="5" height="1" fill="#555" />
<text transform="translate(232.5,499.4) rotate(-90)" font-size="11" fill="#555" text-anchor="middle">2</text>
<rect x="228" y="491.2" width="1" height="1" fill="#666" />
<rect x="228" y="506.6" width="1" height="1" fill="#666" />
<rect x="226" y="517.8" width="5" height="1" fill="#555" />
<text transform="translate(232.5,537.2) rotate(-90)" font-size="11" fill="#555" text-anchor="middle">1</text>
<rect x="228" y="529.0" width="1" height="1" fill="#666" />
<rect x="228" y="544.4" width="1" height="1" fill="#666" />
<rect x="226" y="555.6" width="5" height="1" fill="#555" />
<text transform="translate(232.5,575.0) rotate(-90)" font-size="11" fill="#555" text-anchor="middle">0</text>
<rect x="228" y="566.8" width="1" height="1" fill="#666" />
<rect x="228" y="582.2" width="1" height="1" fill="#666" />
<rect x="226" y="593.4" width="5" height="1" fill="#555" />
<text transform="translate(232.5,612.8) rotate(-90)" font-size="11" fill="#555" text-anchor="middle">1</text>
<rect x="228" y="604.6" width="1" height="1" fill="#666" />
<rect x="228" y="620.0" width="1" height="1" fill="#666" />
<rect x="226" y="631.2" width="5" height="1" fill="#555" />
<text transform="translate(232.5,650.6) rotate(-90)" font-size="11" fill="#555" text-anchor="middle">2</text>
<rect x="228" y="642.4" width="1" height="1" fill="#666" />
<rect x="228" y="657.8" width="1" height="1" fill="#666" />
<rect x="226" y="669.0" width="5" height="1" fill="#555" />
<text transform="translate(232.5,688.4) rotate(-90)" font-size="11" fill="#555" text-anchor="middle">3</text>
<rect x="228" y="680.2" width="1" height="1" fill="#666" />
<rect x="228" y="695.6" width="1" height="1" fill="#666" />
<rect x="226" y="706.8" width="5" height="1" fill="#555" />
<text transform="translate(232.5,726.2) rotate(-90)" font-size="11" fill="#555" text-anchor="middle">4</text>
<rect x="228" y="718.0" width="1" height="1" fill="#666" />
<rect x="228" y="733.4" width="1" height="1" fill="#666" />
<rect x="226" y="744.6" width="5" height="1" fill="#555" />
<text transform="translate(232.5,764.0) rotate(-90)" font-size="11" fill="#555" text-anchor="middle">5</text>
<rect x="228" y="755.8" width="1" height="1" fill="#666" />
<rect x="228" y="771.2" width="1" height="1" fill="#666" />
<rect x="226" y="782.4" width="5" height="1" fill="#555" />
<text transform="translate(232.5,801.8) rotate(-90)" font-size="11" fill="#555" text-anchor="middle">6</text>
<rect x="228" y="793.6" width="1" height="1" fill="#666" />
<rect x="228" y="809.0" width="1" height="1" fill="#666" />
<rect x="226" y="820.2" width="5" height="1" fill="#555" />
<text transform="translate(232.5,839.6) rotate(-90)" font-size="11" fill="#555" text-anchor="middle">7</text>
<rect x="228" y="831.4" width="1" height="1" fill="#666" />
<rect x="228" y="846.8" width="1" height="1" fill="#666" />
<rect x="226" y="858.0" width="5" height="1" fill="#555" />
<text transform="translate(232.5,877.4) rotate(-90)" font-size="11" fill="#555" text-anchor="middle">8</text>
<rect x="228" y="869.2" width="1" height="1" fill="#666" />
<rect x="228" y="884.6" width="1" height="1" fill="#666" />
<rect x="226" y="895.8" width="5" height="1" fill="#555" />
<text transform="translate(232.5,915.2) rotate(-90)" font-size="11" fill="#555" text-anchor="middle">9</text>
<rect x="228" y="907.0" width="1" height="1" fill="#666" />
<rect x="228" y="922.4" width="1" height="1" fill="#666" />
<rect x="226" y="933.6" width="5" height="1" fill="#555" />
<text transform="translate(232.5,953.0) rotate(-90)" font-size="11" fill="#555" text-anchor="middle">10</text>
<rect x="228" y="943.0" width="1" height="1" fill="#666" />
<rect x="228" y="962.0" width="1" height="1" fill="#666" />
<rect x="226" y="971.4" width="5" height="1" fill="#555" />
</g>
<g clip-path="url(#view)">
<rect x="255.5" y="214.5" width="1281" height="720.5" fill="#ffffff" stroke="#c3c3c3" stroke-width="1" />
<rect x="617.5" y="322.5" width="22" height="15" fill="#f7b9a3" stroke="#d8593a" stroke-width="1" />
<text x="628.5" y="333.8" font-size="10.5" fill="#333" text-anchor="middle" >1</text>
<text x="654.7" y="392.8" font-size="65.5" textLength="291.4" lengthAdjust="spacingAndGlyphs" font-family="'Noto Sans CJK JP', sans-serif" font-weight="300" stroke="#000" stroke-width="1.3" stroke-linejoin="round">当店人気</text>
<text x="939.4" y="397.6" font-size="77" textLength="71.7" lengthAdjust="spacingAndGlyphs" font-family="'Noto Sans CJK JP', sans-serif" font-weight="300" stroke="#000" stroke-width="1.3" stroke-linejoin="round">N</text>
<text x="1001.4" y="397.6" font-size="77" textLength="52.7" lengthAdjust="spacingAndGlyphs" font-family="'Noto Sans CJK JP', sans-serif" font-weight="300" stroke="#000" stroke-width="1.3" stroke-linejoin="round">o</text>
<clipPath id="one"><path d="M1050 330H1100V391.5H1084.6V401H1076.4V391.5H1050z"/></clipPath>
<text x="1059" y="397.6" font-size="77" clip-path="url(#one)" font-family="'Noto Sans CJK JP', sans-serif" font-weight="300" stroke="#000" stroke-width="1.3" stroke-linejoin="round">1</text>
<text x="1102" y="394.5" font-size="76" font-family="'Noto Sans CJK JP', sans-serif" font-weight="300" stroke="#000" stroke-width="1.3" stroke-linejoin="round">！</text>
<g id="photo">
<rect x="622" y="478" width="548" height="432" fill="url(#photobg)" />
<g filter="url(#blur4)" opacity="0.25">
<polygon points="700.0,690.7 764.0,738.7 880.0,826.3 982.9,886.9 1017.1,889.1 976.0,862.9 880.0,808.0 694.7,693.3" fill="#444" />
<polygon points="690.7,800.0 740.0,785.3 745.3,789.3 694.7,805.3" fill="#666" />
<polygon points="731.4,615.7 957.1,628.6 1014.3,640.0 957.1,632.9" fill="#888" />
<polygon points="728.6,601.4 785.7,590.0 1082.3,522.3 1082.3,525.7 785.7,593.7" fill="#888" />
<polygon points="851.4,665.7 1128.6,722.9 1137.1,730.3 1131.4,733.0 851.4,670.9" fill="#b98" />
<polygon points="722.7,666.1 1083.4,800.0 1142.9,822.2 1140.6,825.4 1081.1,803.4 721.3,669.9" fill="#a98" />
</g>
<polygon points="728.0,586.3 780.0,575.1 786.3,585.7 727.4,599.4" fill="#c4c4c2" />
<polygon points="727.4,595.4 785.7,582.9 786.3,586.3 727.4,599.4" fill="#9b9b99" />
<line x1="742.9" y1="580.2" x2="737.7" y2="593.3" stroke="#a8a8a6" stroke-width="0.7"/>
<line x1="758.6" y1="577.0" x2="753.4" y2="589.8" stroke="#a8a8a6" stroke-width="0.7"/>
<line x1="772.9" y1="574.2" x2="767.7" y2="586.7" stroke="#a8a8a6" stroke-width="0.7"/>
<polygon points="779.4,573.1 1068.0,501.1 1082.3,509.7 1082.3,520.6 786.3,588.6 777.7,580.6" fill="#b3b1ae" />
<polygon points="779.4,573.1 1068.0,501.1 1072.6,504.6 783.4,577.1" fill="#7d7b79" />
<polygon points="785.7,584.6 1082.3,516.6 1082.3,520.6 786.3,588.6" fill="#8f8d8a" />
<polygon points="802.9,570.6 1047.1,510.9 1048.6,516.6 974.3,534.9 905.7,550.9 803.4,574.6" fill="#1f1f1f" />
<polygon points="974.3,530.9 1044.3,515.4 1047.1,517.7 1014.3,525.7 974.3,536.0" fill="#d9d7d4" />
<polygon points="894.9,535.7 960.0,517.7 975.7,527.1 976.6,533.4 910.0,554.3 897.1,547.1" fill="#2b2b2b" />
<polygon points="894.9,535.7 960.0,517.7 965.7,521.1 900.0,539.4" fill="#4a4a4a" />
<clipPath id="sld"><polygon points="894.9,535.7 960.0,517.7 975.7,527.1 976.6,533.4 910.0,554.3 897.1,547.1"/></clipPath><g clip-path="url(#sld)">
<line x1="896.6" y1="535.0" x2="910.9" y2="551.5" stroke="#101010" stroke-width="0.8"/>
<line x1="901.0" y1="533.7" x2="915.3" y2="550.3" stroke="#101010" stroke-width="0.8"/>
<line x1="905.4" y1="532.5" x2="919.7" y2="549.1" stroke="#101010" stroke-width="0.8"/>
<line x1="909.9" y1="531.3" x2="924.1" y2="547.9" stroke="#101010" stroke-width="0.8"/>
<line x1="914.3" y1="530.1" x2="928.6" y2="546.6" stroke="#101010" stroke-width="0.8"/>
<line x1="918.7" y1="528.8" x2="933.0" y2="545.4" stroke="#101010" stroke-width="0.8"/>
<line x1="923.1" y1="527.6" x2="937.4" y2="544.2" stroke="#101010" stroke-width="0.8"/>
<line x1="927.6" y1="526.4" x2="941.9" y2="543.0" stroke="#101010" stroke-width="0.8"/>
<line x1="932.0" y1="525.2" x2="946.3" y2="541.7" stroke="#101010" stroke-width="0.8"/>
<line x1="936.4" y1="524.0" x2="950.7" y2="540.5" stroke="#101010" stroke-width="0.8"/>
<line x1="940.9" y1="522.7" x2="955.1" y2="539.3" stroke="#101010" stroke-width="0.8"/>
<line x1="945.3" y1="521.5" x2="959.6" y2="538.1" stroke="#101010" stroke-width="0.8"/>
<line x1="949.7" y1="520.3" x2="964.0" y2="536.9" stroke="#101010" stroke-width="0.8"/>
<line x1="954.1" y1="519.1" x2="968.4" y2="535.6" stroke="#101010" stroke-width="0.8"/>
<line x1="958.6" y1="517.8" x2="972.9" y2="534.4" stroke="#101010" stroke-width="0.8"/>
<line x1="963.0" y1="516.6" x2="977.3" y2="533.2" stroke="#101010" stroke-width="0.8"/>
</g>
<circle cx="888.6" cy="554.3" r="2.2" fill="#222"/>
<circle cx="1070.3" cy="508.0" r="1.2" fill="#333"/>
<ellipse cx="1072.0" cy="587.7" rx="65.5" ry="20" fill="none" stroke="#d0d0cc" stroke-width="14.5" opacity="0.8" transform="rotate(-3 1072.0 587.7)"/>
<ellipse cx="1072.0" cy="587.7" rx="65.5" ry="20" fill="none" stroke="#f0f0ee" stroke-width="11" opacity="0.95" transform="rotate(-3 1072.0 587.7)"/>
<ellipse cx="1091.4" cy="640.0" rx="62" ry="20" fill="none" stroke="#d2d2ce" stroke-width="15" opacity="0.8" transform="rotate(9 1091.4 640.0)"/>
<ellipse cx="1091.4" cy="640.0" rx="62" ry="20" fill="none" stroke="#f1f1ef" stroke-width="11.5" opacity="0.95" transform="rotate(9 1091.4 640.0)"/>
<polygon points="954.3,595.7 997.1,586.3 1024.3,590.0 1033.7,612.0 1017.7,639.1 985.7,636.0 957.1,628.6" fill="#cbc9c4" stroke="none" stroke-width="1" opacity="0.9"/>
<polygon points="990.0,588.6 1021.4,589.1 1024.3,600.0 1020.0,605.7 972.9,616.6 957.1,614.3 957.1,605.7" fill="#a09d97" stroke="none" stroke-width="1" opacity="0.85"/>
<polygon points="972.9,618.9 1015.7,607.4 1031.4,622.9 1010.0,635.7 985.7,631.4" fill="#a8a59f" stroke="none" stroke-width="1" opacity="0.8"/>
<polygon points="728.6,614.3 905.7,622.3 955.7,614.3 957.1,627.1 904.3,626.3" fill="#7f7d7a" />
<polygon points="728.6,611.7 954.3,600.0 955.7,614.9 905.7,622.9 729.7,615.1" fill="#b7b5b1" />
<polygon points="728.6,611.7 954.3,600.0 954.6,603.4 731.4,613.1" fill="#d5d3cf" />
<circle cx="920.6" cy="607.7" r="4.6" fill="#cfcfcd" stroke="#6b6b69" stroke-width="1.1"/><circle cx="919.8000000000001" cy="606.9000000000001" r="2" fill="#eee"/>
<polygon points="720.0,620.6 747.1,627.1 752.0,636.0 742.9,633.1" fill="#a9a9a9" />
<polygon points="720.0,620.6 747.1,627.1 748.6,629.7" fill="#e2e2e2" />
<polygon points="747.1,624.3 771.4,622.3 855.7,641.4 850.9,665.1 768.6,648.6 751.4,636.6" fill="#d4a951" />
<polygon points="747.1,624.3 771.4,622.3 855.7,641.4 854.6,647.4 771.4,628.6 748.0,629.1" fill="#ecc97c" />
<polygon points="752.0,634.3 768.6,643.4 851.7,660.6 850.9,665.1 768.6,648.6 751.4,636.6" fill="#b8893a" />
<polygon points="855.7,641.4 1144.9,704.9 1149.1,708.6 1147.4,726.3 1142.3,731.4 1137.1,729.1 850.9,665.1" fill="#fbc01a" />
<polygon points="855.7,641.4 1144.9,704.9 1147.4,707.4 854.9,646.9" fill="#ffdc55" />
<polygon points="852.0,659.4 1140.0,723.4 1142.3,731.4 1137.1,729.1 850.9,665.1" fill="#f1a600" />
<polyline points="905.7,658.9 917.1,654.9 928.6,664.0" fill="none" stroke="#ffe27a" stroke-width="1.6" opacity="0.8"/>
<polyline points="930.9,664.4 942.3,660.4 953.7,669.6" fill="none" stroke="#ffe27a" stroke-width="1.6" opacity="0.8"/>
<polyline points="956.0,670.0 967.4,666.0 978.9,675.2" fill="none" stroke="#ffe27a" stroke-width="1.6" opacity="0.8"/>
<polyline points="981.1,675.6 992.6,671.6 1004.0,680.7" fill="none" stroke="#ffe27a" stroke-width="1.6" opacity="0.8"/>
<polyline points="1006.3,681.2 1017.7,677.2 1029.1,686.3" fill="none" stroke="#ffe27a" stroke-width="1.6" opacity="0.8"/>
<polyline points="1031.4,686.8 1042.9,682.8 1054.3,691.9" fill="none" stroke="#ffe27a" stroke-width="1.6" opacity="0.8"/>
<polyline points="1056.6,692.3 1068.0,688.3 1079.4,697.5" fill="none" stroke="#ffe27a" stroke-width="1.6" opacity="0.8"/>
<polyline points="1081.7,697.9 1093.1,693.9 1104.6,703.1" fill="none" stroke="#ffe27a" stroke-width="1.6" opacity="0.8"/>
<polyline points="1106.9,703.5 1118.3,699.5 1129.7,708.7" fill="none" stroke="#ffe27a" stroke-width="1.6" opacity="0.8"/>
<polygon points="693.3,645.3 700.0,643.7 732.0,649.3 722.7,665.3 700.0,652.0" fill="#dcb48e" />
<polygon points="693.3,645.3 700.0,643.7 704.8,645.9 703.2,650.7 697.3,650.1" fill="#3d3d3d" />
<polygon points="732.0,649.3 1089.1,778.3 1083.4,798.9 722.7,665.3" fill="#e8c2a0" />
<polygon points="732.0,649.3 1089.1,778.3 1087.5,784.0 729.3,654.7" fill="#f4dac3" />
<polygon points="724.5,661.3 1084.8,793.8 1083.4,798.9 722.7,665.3" fill="#cfa07a" />
<text transform="translate(932.6,746.3) rotate(21)" font-size="7" font-style="italic" font-weight="bold" fill="#7a5a44" font-family="'Liberation Serif', serif" opacity="0.8">Writing Pencil</text>
<polygon points="1089.1,778.3 1133.7,792.0 1128.0,814.9 1083.4,798.9" fill="#f0a30d" />
<polygon points="1089.1,778.3 1133.7,792.0 1132.3,797.5 1087.8,783.3" fill="#ffc84a" />
<polygon points="1084.8,793.8 1129.1,809.4 1128.0,814.9 1083.4,798.9" fill="#c97a00" />
<line x1="1099.4" y1="784.6" x2="1093.7" y2="807.0" stroke="#b86c00" stroke-width="1.2"/>
<line x1="1110.9" y1="788.0" x2="1105.1" y2="811.0" stroke="#b86c00" stroke-width="1.2"/>
<line x1="1122.3" y1="791.4" x2="1116.6" y2="815.0" stroke="#b86c00" stroke-width="1.2"/>
<polygon points="1133.7,792.0 1148.6,796.1 1154.3,804.6 1152.0,816.0 1144.0,820.6 1128.0,814.9" fill="#e8e5df" />
<polygon points="1142.9,808.0 1153.1,806.9 1152.0,816.0 1144.0,820.6" fill="#c9c5bd" />
<polygon points="645.3,720.0 660.0,709.9 684.5,708.8 686.7,712.0 651.5,726.7" fill="#f1f1f1" stroke="#dedede" stroke-width="0.6" />
<polygon points="651.5,724.8 684.0,709.9 737.3,754.7 692.0,770.7" fill="#fafafa" />
<polygon points="651.5,724.8 692.0,770.7 690.7,799.5 652.0,754.7" fill="#d7d9e2" />
<polygon points="692.0,770.7 738.7,755.2 740.0,784.0 690.7,799.5" fill="#c2c1bc" />
<polygon points="692.0,770.7 738.7,755.2 738.9,760.5 692.0,776.5" fill="#d6d5d0" />
<polygon points="684.0,709.9 737.3,754.7 726.1,758.9 673.9,714.9" fill="#2a49c6" />
<polygon points="654.1,723.2 662.7,718.9 712.0,765.3 692.5,770.7" fill="#1a1a1a" />
<polygon points="652.0,749.3 655.2,748.0 691.5,790.9 690.9,797.9" fill="#3b50b4" />
<line x1="674.7" y1="765.3" x2="674.7" y2="778.7" stroke="#444" stroke-width="0.7"/>
<line x1="676.8" y1="767.9" x2="676.8" y2="781.2" stroke="#444" stroke-width="0.7"/>
<line x1="678.9" y1="770.4" x2="678.9" y2="783.7" stroke="#444" stroke-width="0.7"/>
<line x1="681.1" y1="772.9" x2="681.1" y2="786.3" stroke="#444" stroke-width="0.7"/>
<line x1="683.2" y1="775.5" x2="683.2" y2="788.8" stroke="#444" stroke-width="0.7"/>
<line x1="685.3" y1="778.0" x2="685.3" y2="791.3" stroke="#444" stroke-width="0.7"/>
<line x1="687.5" y1="780.5" x2="687.5" y2="793.9" stroke="#444" stroke-width="0.7"/>
<text transform="translate(681.9,731.2) rotate(42)" font-size="10.5" font-weight="bold" fill="#111" letter-spacing="1.2">MONO</text>
<text transform="translate(691.5,725.9) rotate(40)" font-size="5" font-weight="bold" fill="#fff">PLASTIC ERASER</text>
<text transform="translate(670.1,740.8) rotate(42)" font-size="6.5" font-style="italic" fill="#eee">TOMBOW</text>
<polygon points="675.5,667.5 680.8,665.3 709.3,674.1 695.2,689.3 677.3,673.3" fill="#50555b" />
<polygon points="709.3,674.1 777.3,712.0 760.0,736.0 695.2,689.3" fill="#1c1c1c" />
<polygon points="709.3,674.1 777.3,712.0 774.7,715.7 706.9,677.3" fill="#3c3c3c" />
<line x1="712.8" y1="676.3" x2="700.0" y2="692.3" stroke="#000" stroke-width="0.9"/>
<line x1="717.7" y1="679.0" x2="704.8" y2="695.7" stroke="#000" stroke-width="0.9"/>
<line x1="722.7" y1="681.8" x2="709.6" y2="699.2" stroke="#000" stroke-width="0.9"/>
<line x1="727.6" y1="684.5" x2="714.4" y2="702.7" stroke="#000" stroke-width="0.9"/>
<line x1="732.5" y1="687.3" x2="719.2" y2="706.1" stroke="#000" stroke-width="0.9"/>
<line x1="737.5" y1="690.0" x2="724.0" y2="709.6" stroke="#000" stroke-width="0.9"/>
<line x1="742.4" y1="692.7" x2="728.8" y2="713.1" stroke="#000" stroke-width="0.9"/>
<line x1="747.3" y1="695.5" x2="733.6" y2="716.5" stroke="#000" stroke-width="0.9"/>
<line x1="752.3" y1="698.2" x2="738.4" y2="720.0" stroke="#000" stroke-width="0.9"/>
<line x1="757.2" y1="701.0" x2="743.2" y2="723.5" stroke="#000" stroke-width="0.9"/>
<line x1="762.1" y1="703.7" x2="748.0" y2="726.9" stroke="#000" stroke-width="0.9"/>
<line x1="767.1" y1="706.5" x2="752.8" y2="730.4" stroke="#000" stroke-width="0.9"/>
<line x1="772.0" y1="709.2" x2="757.6" y2="733.9" stroke="#000" stroke-width="0.9"/>
<polygon points="769.3,708.8 780.0,713.3 762.7,738.1 754.7,732.0" fill="#3a3e42" />
<polygon points="780.0,713.3 964.6,826.3 955.4,848.0 761.9,737.6" fill="#0b0b0b" />
<polygon points="780.0,713.3 964.6,826.3 962.7,830.9 777.3,717.3" fill="#454545" />
<polygon points="776.0,720.0 962.3,832.7 961.1,835.4 774.7,722.7" fill="#1d1d1d" />
<polygon points="874.7,810.7 882.7,805.9 980.6,869.7 987.4,877.0 986.3,883.4 978.3,886.2 907.4,843.4 877.3,824.0 873.3,817.3" fill="#5a6067" />
<polygon points="882.7,805.9 980.6,869.7 983.3,872.5 889.1,818.3" fill="#7b8188" />
<polygon points="955.4,830.9 965.7,825.1 1001.1,844.6 1004.6,849.1 1017.1,854.9 1025.1,862.9 1026.3,878.9 1017.1,888.0 1004.6,886.9 989.7,878.9 987.4,873.1 950.9,848.0" fill="#565c63" />
<polygon points="965.7,825.1 1001.1,844.6 998.9,849.1 962.7,829.7" fill="#767c83" />
<polygon points="1004.6,849.1 1017.1,854.9 1025.1,862.9 1026.3,878.9 1017.1,888.0 1004.6,886.9 989.7,878.9 992.0,862.9" fill="#454a50" />
<polygon points="1004.6,849.1 1017.1,854.9 1024.5,862.4 1008.0,856.0" fill="#6d737a" />
<circle cx="1020.6" cy="877.0" r="1.1" fill="#111"/>
<text transform="translate(803.5,744.5) rotate(31)" font-size="7.6" font-weight="bold" font-style="italic" fill="#fff">Knock Ball 0.4</text>
<g transform="translate(849.9,771.7) rotate(31)"><rect x="0" y="-6.5" width="12.5" height="7.5" fill="none" stroke="#fff" stroke-width="0.7"/><text x="1.6" y="-0.8" font-size="5" font-weight="bold" fill="#fff">100</text></g>
<text transform="translate(865.3,780.8) rotate(31)" font-size="5" font-weight="bold" fill="#fff" textLength="63" lengthAdjust="spacingAndGlyphs">IMPORTED BY PLATINUM</text>
</g>
</g>
<rect x="219.5" y="966.5" width="14" height="14" fill="#ffffff" stroke="#ababab" stroke-width="1" />
<path d="M228.5 970l-4 3.5l4 3.5z" fill="#555" />
<rect x="234" y="966.5" width="1142" height="14" fill="#dadada" />
<rect x="234.5" y="966.5" width="1005" height="14" fill="#ffffff" stroke="#ababab" stroke-width="1" />
<rect x="1376.5" y="966.5" width="14" height="14" fill="#ffffff" stroke="#ababab" stroke-width="1" />
<path d="M1381.5 970l4 3.5l-4 3.5z" fill="#555" />
</g>
<g id="status">
<rect x="0" y="988" width="1680" height="22" fill="#f3f3f3" />
<rect x="0" y="988" width="1680" height="1" fill="#dcdcdc" />
<text x="6" y="1004.3" font-size="13.2" fill="#333" textLength="57.5" lengthAdjust="spacingAndGlyphs" >スライド 1/1</text>
<path d="M84.5 993.5h5.5l1 1.2l1-1.2h2 M84.5 993.5v9.5h5.5l1 1.2 M91 994.7v9.5 M91 1004.2l1-1.2h5.5v-4" fill="none" stroke="#666" stroke-width="1" />
<path d="M93 996.5l2 2l3.5-4.5" fill="none" stroke="#666" stroke-width="1.1" />
<text x="115.5" y="1004.3" font-size="13.2" fill="#333" textLength="35.0" lengthAdjust="spacingAndGlyphs" >日本語</text>
<path d="M1264.2 998.7h10.8 M1264.2 1001.5h10.8 M1264.2 1004.3h6" fill="none" stroke="#555" stroke-width="1.1" />
<path d="M1267.2 996.6h5.4l-2.7-3z" fill="#555" />
<text x="1280.8" y="1004.0" font-size="13.2" fill="#333" textLength="25.2" lengthAdjust="spacingAndGlyphs" >ノート</text>
<rect x="1325.3" y="989" width="37.5" height="21" fill="#c6c6c6" />
<path d="M1337.8 992.9h12.6v11.3h-12.6z M1340.8 992.9v11.3 M1340.8 1000.8h9.6 M1343.3 995h4.6v2.6h-4.6z" fill="none" stroke="#666" stroke-width="1.1" />
<rect x="1375.7" y="992.8" width="4.6" height="3.4" fill="none" stroke="#666" stroke-width="1.1" />
<rect x="1375.7" y="1000.9" width="4.6" height="3.4" fill="none" stroke="#666" stroke-width="1.1" />
<rect x="1383.8" y="992.8" width="4.6" height="3.4" fill="none" stroke="#666" stroke-width="1.1" />
<rect x="1383.8" y="1000.9" width="4.6" height="3.4" fill="none" stroke="#666" stroke-width="1.1" />
<path d="M1419.5 993.6c-1.8-1.3-4.2-1.5-6 -0.9v9.6c1.8-0.6 4.2-0.4 6 0.9c1.8-1.3 4.2-1.5 6-0.9v-9.6c-1.8-0.6-4.2-0.4-6 0.9z M1419.5 993.6v11" fill="none" stroke="#666" stroke-width="1" />
<path d="M1415 995.8h3 M1415 997.8h3 M1415 999.8h3 M1415 1001.6h3 M1421 995.8h3 M1421 997.8h3 M1421 999.8h3 M1421 1001.6h3" fill="none" stroke="#666" stroke-width="0.8" />
<path d="M1451 994.4h13" fill="none" stroke="#666" stroke-width="1.7" />
<path d="M1453.2 995v4.8h8.6v-4.8 M1457.5 999.8v4.2 M1454.7 1004.3h5.6" fill="none" stroke="#666" stroke-width="1.1" />
<path d="M1482 999h6" fill="none" stroke="#555" stroke-width="1.6" />
<line x1="1492" y1="999.5" x2="1592" y2="999.5" stroke="#aaaaaa" stroke-width="1" />
<rect x="1540" y="993.5" width="4.5" height="11" fill="#666" />
<path d="M1596 999h7 M1599.5 995.5v7" fill="none" stroke="#555" stroke-width="1.6" />
<text x="1614.5" y="1004.3" font-size="13.2" fill="#333" textLength="32.0" lengthAdjust="spacingAndGlyphs" >100%</text>
<path d="M1662 993.5h11.5v11.5h-11.5z" fill="none" stroke="#555" stroke-width="1" />
<path d="M1667.7 995v3 M1667.7 1000.5v3 M1663.5 999.2h3 M1669 999.2h3" fill="none" stroke="#555" stroke-width="1" />
<rect x="0" y="1010" width="1680" height="40" fill="#000000" />
<path d="M16 1024.3l6.6-0.9v6.3h-6.6z M23.6 1023.2l8.4-1.2v7.7h-8.4z M16 1030.7h6.6v6.3l-6.6-0.9z M23.6 1030.7h8.4v7.7l-8.4-1.2z" fill="#ffffff" />
<rect x="48" y="1010" width="344" height="40" fill="#f2f2f2" />
<circle cx="68" cy="1030" r="9.3" fill="none" stroke="#1c1c1c" stroke-width="2.8"/>
<text x="88" y="1035.9" font-size="15" fill="#3a3a3a" textLength="112" lengthAdjust="spacingAndGlyphs" >ここに入力して検索</text>
<path d="M369 1022.5a2.5 2.5 0 0 1 5 0v6.5a2.5 2.5 0 0 1-5 0z" fill="none" stroke="#333" stroke-width="1.2" />
<path d="M366.8 1028.5a4.7 4.7 0 0 0 9.4 0 M371.5 1033.5v3.5 M368.5 1037.2h6" fill="none" stroke="#333" stroke-width="1.2" />
<path d="M409.5 1023.5h12v13h-12z M407.5 1025.5h-2v9h2 M423.5 1025.5h2v9h-2" fill="none" stroke="#ffffff" stroke-width="1.2" />
<path d="M456.5 1030.5c0.3-6.5 5-10.8 10.8-10.8c6.4 0 10.2 4.6 10.2 11.3v2h-14.2c0.4 3.3 3.2 5 6.6 5c2.6 0 4.9-0.7 6.8-1.9v4.6c-2.2 1.2-4.9 1.8-7.9 1.8c-6.6 0-11.3-4.2-11.3-10.6c0-4.6 2.6-8.2 6.3-10c-2.2 1.8-3.4 4.3-3.6 6.9h8.4c0-2.8-1.3-4.6-3.9-4.6c-3.3 0-6.8 2.3-8.2 6.3z" fill="#1b7fd6" />
<circle cx="515.5" cy="1030" r="11" fill="#db4437"/>
<path d="M515.5 1030L505.97 1024.5A11 11 0 0 0 515.5 1041z" fill="#0f9d58" />
<path d="M515.5 1030L515.5 1041A11 11 0 0 0 525.03 1024.5z" fill="#ffcd40" />
<circle cx="515.5" cy="1030" r="5.2" fill="#fff"/><circle cx="515.5" cy="1030" r="4" fill="#4285f4"/>
<ellipse cx="565" cy="1030" rx="10.3" ry="10.8" fill="#e3101f"/><ellipse cx="565" cy="1030" rx="4.2" ry="7.8" fill="#000"/>
<path d="M603 1021.5h7l1.5 1.5h12.5v15h-21z" fill="#f6d36b" />
<rect x="603" y="1025" width="21" height="13" fill="#fbe08a" />
<path d="M608 1038v-5.5h11v5.5h-3v-3h-5v3z" fill="#3aa0e0" />
<circle cx="663" cy="1030" r="10" fill="#1a1a1a" stroke="#9a9a9a" stroke-width="1.6"/>
<path d="M654 1026q9 8 18 2 M656 1037q4-12 12-15 M660 1021q8 4 6 18" fill="none" stroke="#bdbdbd" stroke-width="1.3" />
<rect x="712" y="1021.5" width="12" height="17" fill="#ffffff" stroke="#2b579a" stroke-width="1" />
<path d="M714 1025h8 M714 1028h8 M714 1031h8 M714 1034h8" fill="none" stroke="#2b579a" stroke-width="1" />
<path d="M700.5 1021.5l13-2v21l-13-2z" fill="#2b579a" />
<text x="707" y="1034" font-size="10" font-weight="bold" fill="#fff" text-anchor="middle">W</text>
<rect x="737" y="1010" width="48" height="40" fill="#3c3c3c" />
<rect x="761" y="1021.5" width="12" height="17" fill="#ffffff" stroke="#d24726" stroke-width="1" />
<path d="M764 1030h7 M764 1033h7" fill="none" stroke="#d24726" stroke-width="1" />
<circle cx="767.5" cy="1026" r="2.5" fill="none" stroke="#d24726" stroke-width="1"/>
<path d="M749.5 1021.5l13-2v21l-13-2z" fill="#d24726" />
<text x="756" y="1034" font-size="10" font-weight="bold" fill="#fff" text-anchor="middle">P</text>
<rect x="496" y="1048" width="40" height="2" fill="#76b9ed" />
<rect x="594" y="1048" width="40" height="2" fill="#76b9ed" />
<rect x="643" y="1048" width="40" height="2" fill="#76b9ed" />
<rect x="692" y="1048" width="40" height="2" fill="#76b9ed" />
<rect x="737" y="1048" width="48" height="2" fill="#76b9ed" />
<rect x="625" y="1048" width="1" height="2" fill="#3a5a7a" />
<path d="M1432.5 1036.5a4 4 0 0 1 8 0 M1440 1031a4.2 4.2 0 0 1 6.3 1" fill="none" stroke="#ffffff" stroke-width="1.2" />
<circle cx="1436.5" cy="1029.8" r="2.5" fill="none" stroke="#fff" stroke-width="1.2"/><circle cx="1442.8" cy="1024.8" r="2.5" fill="none" stroke="#fff" stroke-width="1.2"/>
<path d="M1469.5 1032.5l5.7-5.5l5.7 5.5" fill="none" stroke="#ffffff" stroke-width="1.3" />
<path d="M1494.5 1024.5h12v9h-12 M1493.5 1036.5h10 M1498.5 1033.5v3" fill="none" stroke="#ffffff" stroke-width="1.2" />
<path d="M1491.5 1024.5h5v4h-5z M1494 1028.5v8" fill="#000" stroke="#ffffff" stroke-width="1.1" />
<path d="M1515.5 1027.5h3l4-4v13l-4-4h-3z" fill="none" stroke="#ffffff" stroke-width="1.1" />
<path d="M1524.5 1027.5q1.6 2.5 0 5 M1526.8 1025.5q2.8 4.5 0 9 M1529 1023.8q4 6.2 0 12.4" fill="none" stroke="#ffffff" stroke-width="1" />
<circle cx="1546" cy="1030" r="7" fill="#8c8c8c"/>
<path d="M1543 1027l6 6 M1549 1027l-6 6" fill="none" stroke="#000" stroke-width="1.6" />
<text x="1581" y="1025.8" font-size="12" fill="#ffffff" textLength="21" lengthAdjust="spacingAndGlyphs" >9:57</text>
<text x="1563.5" y="1043.3" font-size="12" fill="#ffffff" textLength="57.5" lengthAdjust="spacingAndGlyphs" >2018/04/16</text>
<path d="M1639.5 1022.5h15v11.5h-5.5l-2 2l-2-2h-5.5z" fill="none" stroke="#ffffff" stroke-width="1.2" />
<line x1="1675.5" y1="1010" x2="1675.5" y2="1050" stroke="#666" stroke-width="1" />
</g>
<g id="dialog">
<text x="1423.5" y="193.9" font-size="20.5" fill="#d4492a" textLength="172.5" lengthAdjust="spacingAndGlyphs" >アニメーション ウィン..</text>
<path d="M1609.5 179h10l-5 5.2z" fill="#666" />
<path d="M1651.5 176.5l9 9 M1660.5 176.5l-9 9" fill="none" stroke="#555" stroke-width="2" />
<rect x="1425.5" y="206.5" width="92" height="25" fill="#ffffff" stroke="#ababab" stroke-width="1" />
<path d="M1434.5 213.5l5.5 5l-5.5 5z" fill="#b5b5b5" stroke="#777" stroke-width="1" />
<text x="1452" y="222.8" font-size="13.2" fill="#333" textLength="57.5" lengthAdjust="spacingAndGlyphs" >ここから再生</text>
<rect x="1610.5" y="207" width="24.5" height="24" fill="#fbfbfb" />
<rect x="1640" y="207" width="24.5" height="24" fill="#fbfbfb" />
<path d="M1618 221.5h9.4l-4.7-5z" fill="#c9c9c9" />
<path d="M1647.5 217h9.4l-4.7 5z" fill="#c9c9c9" />
<rect x="1425" y="241" width="240" height="22" fill="#fbcdb5" />
<rect x="1665" y="241" width="5" height="22" fill="#dedede" />
<text x="1436" y="256.8" font-size="13.2" fill="#333" textLength="5" lengthAdjust="spacingAndGlyphs" >1</text>
<polygon points="1452.00,245.20 1453.75,250.59 1459.42,250.59 1454.83,253.92 1456.58,259.31 1452.00,255.98 1447.42,259.31 1449.17,253.92 1444.58,250.59 1450.25,250.59" fill="#6aa893" />
<text x="1466.5" y="256.7" font-size="13" fill="#333" textLength="81.5" lengthAdjust="spacingAndGlyphs" >当店人気No1！</text>
<rect x="1568.5" y="245.5" width="39" height="13" fill="#9ddc85" stroke="#3e6b35" stroke-width="1" />
<path d="M1649.5 250.5h8l-4 4.5z" fill="#333" />
<rect x="1633.1" y="235.6" width="39.4" height="32.3" fill="none" stroke="#f4351a" stroke-width="5.6" />
<text x="1473.5" y="967.3" font-size="13.2" fill="#555" textLength="12.5" lengthAdjust="spacingAndGlyphs" >秒</text>
<path d="M1490 961h7l-3.5 3.8z" fill="#777" />
<path d="M1553.5 958.5v8l-4.5-4z" fill="#666" />
<path d="M1653.5 958.5v8l4.5-4z" fill="#666" />
<rect x="1560.5" y="954.5" width="87.5" height="16" fill="#e6e6e6" stroke="#9a9a9a" stroke-width="1" />
<rect x="1560.5" y="954.5" width="16" height="16" fill="#f0f0f0" stroke="#555" stroke-width="1" />
<text x="1568.5" y="966.8" font-size="12" fill="#444" text-anchor="middle" >0</text>
<text x="1608.5" y="966.8" font-size="12" fill="#444" text-anchor="middle" >2</text>
<rect x="1588" y="961" width="1" height="3" fill="#888" />
<rect x="1628" y="961" width="1" height="3" fill="#888" />
<path d="M1647 960.5l-2 2.5" fill="none" stroke="#a65" stroke-width="1" />
<rect x="1179" y="294" width="502" height="371" fill="#000" opacity="0.27" filter="url(#dshadow)"/>
<rect x="1183.5" y="297.5" width="493" height="360" fill="#f0f0f0" stroke="#2a8ad8" stroke-width="1" />
<rect x="1184" y="298" width="492" height="30" fill="#ffffff" />
<text x="1192" y="317.3" font-size="13.2" fill="#111" textLength="26" lengthAdjust="spacingAndGlyphs" >ターン</text>
<text x="1605" y="317.3" font-size="13.2" fill="#111" textLength="6" lengthAdjust="spacingAndGlyphs" font-weight="bold" >?</text>
<path d="M1647.5 307l11 11 M1658.5 307l-11 11" fill="none" stroke="#111" stroke-width="1.2" />
<rect x="1191.5" y="358.5" width="475.5" height="254" fill="#ffffff" stroke="#d9d9d9" stroke-width="1" />
<rect x="1242.5" y="338.5" width="50" height="20" fill="#f0f0f0" stroke="#d9d9d9" stroke-width="1" />
<rect x="1191.5" y="336.5" width="51" height="22" fill="#ffffff" stroke="#d9d9d9" stroke-width="1" />
<rect x="1192" y="357.5" width="50" height="2.5" fill="#ffffff" />
<text x="1199" y="351.3" font-size="13.2" fill="#111" textLength="24" lengthAdjust="spacingAndGlyphs" >効果</text>
<text x="1246.5" y="352.8" font-size="13.2" fill="#111" textLength="42.5" lengthAdjust="spacingAndGlyphs" >タイミング</text>
<text x="1202.5" y="381.8" font-size="13.2" fill="#111" textLength="23.0" lengthAdjust="spacingAndGlyphs" >強調</text>
<line x1="1230.5" y1="376.5" x2="1657" y2="376.5" stroke="#a0a0a0" stroke-width="1" />
<text x="1212.5" y="408.3" font-size="13.2" fill="#111" textLength="58.5" lengthAdjust="spacingAndGlyphs" >サウンド(S):</text>
<line x1="1259" y1="410.5" x2="1265.5" y2="410.5" stroke="#111" stroke-width="1" />
<text x="1212.5" y="435.3" font-size="13.2" fill="#111" textLength="140.0" lengthAdjust="spacingAndGlyphs" >アニメーションの後の動作(A):</text>
<line x1="1339" y1="437.5" x2="1346.5" y2="437.5" stroke="#111" stroke-width="1" />
<text x="1212.5" y="463.8" font-size="13.2" fill="#111" textLength="92.5" lengthAdjust="spacingAndGlyphs" >テキストの動作(X):</text>
<line x1="1291.5" y1="466" x2="1298.5" y2="466" stroke="#111" stroke-width="1" />
<text x="1574" y="497.3" font-size="13.2" fill="#a8a8a8" textLength="30" lengthAdjust="spacingAndGlyphs" >延(D)</text>
<line x1="1592" y1="499.5" x2="1599" y2="499.5" stroke="#a8a8a8" stroke-width="1" />
<rect x="1402.5" y="392.5" width="177" height="22" fill="#ffffff" stroke="#acacac" stroke-width="1" />
<text x="1406" y="407.8" font-size="13.2" fill="#111" textLength="64.5" lengthAdjust="spacingAndGlyphs" >[サウンドなし]</text>
<rect x="1561.5" y="394.5" width="16.5" height="18" fill="#e1e1e1" stroke="#adadad" stroke-width="1" />
<path d="M1565.8 401.5l4 4l4 -4" fill="none" stroke="#333" stroke-width="1.1" />
<rect x="1402.5" y="420.0" width="177" height="22" fill="#ffffff" stroke="#acacac" stroke-width="1" />
<text x="1406" y="435.3" font-size="13.2" fill="#111" textLength="47" lengthAdjust="spacingAndGlyphs" >淡くしない</text>
<rect x="1561.5" y="422.0" width="16.5" height="18" fill="#e1e1e1" stroke="#adadad" stroke-width="1" />
<path d="M1565.8 429.0l4 4l4 -4" fill="none" stroke="#333" stroke-width="1.1" />
<rect x="1402.5" y="447.5" width="177" height="22" fill="#ffffff" stroke="#acacac" stroke-width="1" />
<text x="1406" y="462.8" font-size="13.2" fill="#111" textLength="52.5" lengthAdjust="spacingAndGlyphs" >すべて同時</text>
<rect x="1561.5" y="449.5" width="16.5" height="18" fill="#e5f1fb" stroke="#0078d7" stroke-width="1" />
<path d="M1565.8 456.5l4 4l4 -4" fill="none" stroke="#333" stroke-width="1.1" />
<rect x="1592.5" y="393.5" width="24.5" height="24" fill="#e1e1e1" stroke="#adadad" stroke-width="1" />
<path d="M1598.5 402.5h3l4.5 -4.5v14l-4.5 -4.5h-3z" fill="none" stroke="#9a9a9a" stroke-width="1" />
<path d="M1607.5 401.5q2.5 3.5 0 7" fill="none" stroke="#9a9a9a" stroke-width="1" />
<rect x="1402.5" y="470.5" width="177" height="55" fill="#ffffff" stroke="#222" stroke-width="1" />
<rect x="1403.5" y="507.5" width="175" height="17" fill="#99c9ef" stroke="#333" stroke-width="1" stroke-dasharray="1 1"/>
<text x="1405.5" y="486.3" font-size="13.2" fill="#111" textLength="52.0" lengthAdjust="spacingAndGlyphs" >すべて同時</text>
<text x="1405.5" y="504.3" font-size="13.2" fill="#111" textLength="81.0" lengthAdjust="spacingAndGlyphs" >単語単位で表示</text>
<text x="1405.5" y="522.3" font-size="13.2" fill="#111" textLength="81.0" lengthAdjust="spacingAndGlyphs" >文字単位で表示</text>
<rect x="1484.5" y="625.5" width="83.5" height="21.5" fill="#e1e1e1" stroke="#0078d7" stroke-width="2" />
<text x="1525.5" y="640.3" font-size="13.2" fill="#111" text-anchor="middle" >OK</text>
<rect x="1582.5" y="625" width="85" height="22.5" fill="#e1e1e1" stroke="#adadad" stroke-width="1" />
<text x="1601" y="640.8" font-size="13.2" fill="#111" textLength="47" lengthAdjust="spacingAndGlyphs" >キャンセル</text>
</g>
</svg>
</body></html>
